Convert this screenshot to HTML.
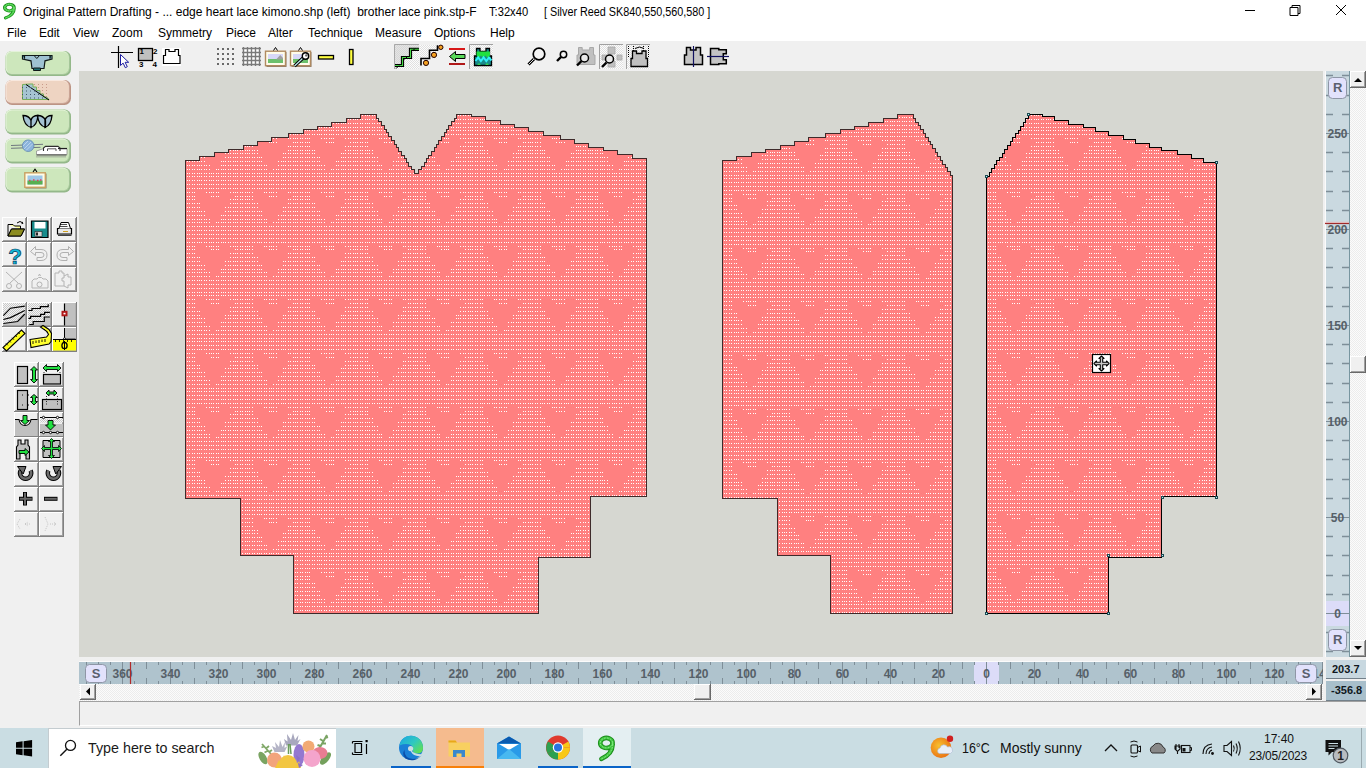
<!DOCTYPE html>
<html><head><meta charset="utf-8">
<style>
*{margin:0;padding:0;box-sizing:border-box}
html,body{width:1366px;height:768px;overflow:hidden;background:#f0f0f0;font-family:"Liberation Sans",sans-serif;font-size:12px;color:#000}
.a{position:absolute}
.t{position:absolute;white-space:pre;line-height:1}
#title{left:0;top:0;width:1366px;height:22px;background:#fff}
#menu{left:0;top:22px;width:1366px;height:19px;background:#fff}
#menu span{position:absolute;top:5px;font-size:12px;line-height:1}
#canvas{left:79px;top:71px;width:1244px;height:586px;background:#d6d7d1}
#vrul{left:1326px;top:71px;width:23px;height:586px;background:#cad9e0}
#vsb{left:1350px;top:71px;width:16px;height:586px}
#hrul{left:79px;top:662px;width:1244px;height:22px;background:#afc3cd}
#hsb{left:79px;top:684px;width:1244px;height:17px}
.chk{background-color:#fbfbfb;background-image:linear-gradient(45deg,#ececec 25%,transparent 25%,transparent 75%,#ececec 75%),linear-gradient(45deg,#ececec 25%,transparent 25%,transparent 75%,#ececec 75%);background-size:2px 2px;background-position:0 0,1px 1px}
#status{left:79px;top:701px;width:1287px;height:25px;background:#f0f0f0;border-top:1px solid #a0a0a0;border-left:1px solid #a0a0a0;border-bottom:1px solid #fff}
#taskbar{left:0;top:728px;width:1366px;height:40px;background:#cadde3}
</style></head><body>
<div id="title" class="a">
<svg class="a" style="left:0;top:0" width="22" height="22"><g transform="translate(2.6 2.9) scale(0.75 0.655)"><g fill="none" stroke-linecap="round"><path d="M15.2 7.2A6.2 5 0 1 1 15.2 7.1M15.3 8.5Q15 18.5 4 23" stroke="#1a8a1a" stroke-width="4.6"/><path d="M15.2 7.2A6.2 5 0 1 1 15.2 7.1M15.3 8.5Q15 18.5 4 23" stroke="#3cc23c" stroke-width="2.8"/><path d="M15.2 7.2A6.2 5 0 1 1 15.2 7.1M15.3 8.5Q15 18.5 4 23" stroke="#90f090" stroke-width="1" stroke-dasharray="1 2"/></g></g></svg>
<span class="t" style="left:23px;top:6px">Original Pattern Drafting - ... edge heart lace kimono.shp (left)  brother lace pink.stp-F</span>
<span class="t" style="left:489px;top:6px;transform-origin:0 0;transform:scaleX(0.93)">T:32x40</span>
<span class="t" style="left:544px;top:6px;transform-origin:0 0;transform:scaleX(0.90)">[ Silver Reed SK840,550,560,580 ]</span>
<svg class="a" style="left:1230px;top:0" width="136" height="22" fill="none" stroke="#000" stroke-width="1"><path d="M15 10.5h10"/><path d="M60 7.5h8v8h-8z M62 7.5v-2h8v8h-2"/><path d="M106 5l10 10M116 5l-10 10"/></svg>
</div>
<div id="menu" class="a">
<span style="left:7px">File</span><span style="left:39px">Edit</span><span style="left:73px">View</span><span style="left:112px">Zoom</span><span style="left:158px">Symmetry</span><span style="left:226px">Piece</span><span style="left:268px">Alter</span><span style="left:308px">Technique</span><span style="left:375px">Measure</span><span style="left:434px">Options</span><span style="left:490px">Help</span>
</div>
<svg class="a" style="left:0;top:0" width="760" height="72">
<defs>
<pattern id="chk2" patternUnits="userSpaceOnUse" width="2" height="2"><rect width="2" height="2" fill="#fcfcfc"/><rect width="1" height="1" fill="#e0e0e0"/><rect x="1" y="1" width="1" height="1" fill="#e0e0e0"/></pattern>
</defs>
<!-- crosshair + cursor -->
<path d="M118.5 46v22M111 52.5h22" stroke="#000" stroke-width="1.2"/>
<path d="M120.5 54.5v11l2.6-2.4 2.2 4.6 2-1-2.2-4.4h3.6z" fill="#fff" stroke="#1c1ca0" stroke-width="1"/>
<!-- numbered square -->
<rect x="138.5" y="48.5" width="14" height="12" fill="#c0c0c0" stroke="#000" stroke-width="1.3"/>
<g font-family="Liberation Sans" font-size="8" font-weight="bold" fill="#000">
<text x="139.5" y="53.8">1</text><text x="153" y="53.8">2</text><text x="139" y="67">3</text><text x="152.5" y="67">4</text>
</g>
<!-- garment outline -->
<rect x="162" y="48" width="19" height="18" fill="#fff"/>
<path d="M163.5 63.5v-8h2v-6h3.5v2h6v-2h3.5v6h1.5v8z" fill="#fff" stroke="#000" stroke-width="1.2"/>
<!-- dots -->
<g fill="#6a6a6a">
<rect x="217" y="48" width="2" height="2"/><rect x="222" y="48" width="2" height="2"/><rect x="227" y="48" width="2" height="2"/><rect x="232" y="48" width="2" height="2"/>
<rect x="217" y="53" width="2" height="2"/><rect x="222" y="53" width="2" height="2"/><rect x="227" y="53" width="2" height="2"/><rect x="232" y="53" width="2" height="2"/>
<rect x="217" y="58" width="2" height="2"/><rect x="222" y="58" width="2" height="2"/><rect x="227" y="58" width="2" height="2"/><rect x="232" y="58" width="2" height="2"/>
<rect x="217" y="63" width="2" height="2"/><rect x="222" y="63" width="2" height="2"/><rect x="227" y="63" width="2" height="2"/><rect x="232" y="63" width="2" height="2"/>
</g>
<!-- grid -->
<rect x="243" y="48" width="17" height="17" fill="#fff"/>
<path d="M243.5 47v19M247.5 47v19M251.5 47v19M255.5 47v19M259.5 47v19M242 48.5h19M242 52.5h19M242 56.5h19M242 60.5h19M242 64.5h19" stroke="#7a7a7a" stroke-width="1.4"/>
<!-- picture -->
<rect x="266.5" y="52" width="20" height="15" fill="#8c7c6c"/>
<rect x="265.5" y="51.2" width="20" height="14.5" fill="#fffcea" stroke="#b08a60" stroke-width="1.4"/>
<rect x="268" y="54" width="15" height="9" fill="#d8d8f8"/>
<rect x="268" y="59" width="15" height="4" fill="#6cc06c"/>
<path d="M276 59.5l4.3-4.5 2.7 3v1.5z" fill="#a0a0a0"/>
<path d="M273.5 50.5l2-3 2 3" fill="none" stroke="#000" stroke-width="1"/>
<!-- picture + wrench -->
<rect x="291.5" y="52" width="20" height="15" fill="#8c7c6c"/>
<rect x="290.5" y="51.2" width="20" height="14.5" fill="#fffcea" stroke="#b08a60" stroke-width="1.4"/>
<rect x="293" y="54" width="15" height="9" fill="#d8d8f8"/>
<rect x="293" y="59" width="15" height="4" fill="#6cc06c"/>
<path d="M298.5 50.5l2-3 2 3" fill="none" stroke="#000" stroke-width="1"/>
<path d="M294.5 66l8.5-8" stroke="#000" stroke-width="3.2"/>
<path d="M294.5 66l8.5-8" stroke="#bfeef0" stroke-width="1.2"/>
<circle cx="305.5" cy="56" r="3.2" fill="#fff" stroke="#000" stroke-width="1.4"/>
<circle cx="306.3" cy="55.4" r="1.2" fill="#666"/>
<!-- rulers -->
<rect x="318.5" y="55.5" width="15" height="3.5" fill="#ffff40" stroke="#000" stroke-width="1.3"/>
<rect x="349.5" y="49.5" width="3.5" height="15" fill="#ffff40" stroke="#000" stroke-width="1.3"/>
<!-- stairs pressed -->
<rect x="394" y="44" width="25" height="25" fill="url(#chk2)"/>
<path d="M395 64.5h7.7v-8h7.8v-8.2h8.5V45H395z" fill="#d0d0d0" opacity=".55"/>
<path d="M394.5 69V44.5H419" fill="none" stroke="#a8a8a8" stroke-width="1"/>
<path d="M395 65.5h7.5v-8h8v-8.2h8.5" fill="none" stroke="#000" stroke-width="3.2"/>
<path d="M395 65.5h7.5v-8h8v-8.2h8.5" fill="none" stroke="#48d848" stroke-width="1.1"/>
<path d="M396 68.6l3-3M404.5 59.5l2.5-2.5M412.5 51l2.5-2.5" stroke="#000" stroke-width="1"/>
<!-- stairs with dots -->
<rect x="420" y="45" width="17.5" height="13.6" fill="url(#chk2)"/>
<path d="M421 65.5v-7h8.5v-8.2h8v-5" fill="none" stroke="#000" stroke-width="1.6"/>
<circle cx="426" cy="62.9" r="2.6" fill="#f4a020" stroke="#200" stroke-width="1"/>
<circle cx="434" cy="54.9" r="2.6" fill="#f4a020" stroke="#200" stroke-width="1"/>
<circle cx="440.8" cy="47.3" r="2.2" fill="#f4a020" stroke="#200" stroke-width="1"/>
<!-- arrow -->
<rect x="449" y="48" width="16" height="2" fill="#d81818"/>
<rect x="449" y="63" width="16" height="2" fill="#b01818"/>
<path d="M449.5 56.5l6-5v3h9.5v4h-9.5v3z" fill="#58d858" stroke="#000" stroke-width="1"/>
<!-- vest pressed -->
<rect x="469" y="44" width="24" height="25" fill="url(#chk2)"/>
<path d="M469.5 69V44.5H493" fill="none" stroke="#a0a0a0" stroke-width="1"/>
<path d="M474.5 65.5v-9.5h2v-7.5h3.5v3h6v-3h3.5v7.5h2v9.5z" fill="#1a8a8a" stroke="#000" stroke-width="1.3"/>
<path d="M476.5 51.5h13.5v4l-2.2 2.5-2.3-2.5-2.2 2.5-2.3-2.5-2.2 2.5-2.3-2.5z" fill="#20e040"/>
<path d="M475.5 61l2.7-3.5 2.7 3.5 2.7-3.5 2.7 3.5 2.7-3.5 2.5 3" fill="none" stroke="#30f0f8" stroke-width="2"/>
<path d="M477 65l2-2 2 2M485 65l2-2 2 2" fill="#30d050" stroke="none"/>
<!-- magnifiers -->
<path d="M528.5 64.5l5.5-5.5" stroke="#000" stroke-width="3"/><path d="M528.5 64.5l5.5-5.5" stroke="#ddd" stroke-width="1"/>
<circle cx="539" cy="54" r="5.8" fill="#f4f4f4" stroke="#000" stroke-width="1.7"/>
<path d="M557 61l4-4" stroke="#000" stroke-width="2.4"/>
<circle cx="563.5" cy="54.5" r="3.2" fill="#f4f4f4" stroke="#000" stroke-width="1.5"/>
<path d="M577 64.5v-9.5h1.5v-7.5h3.7v2.5h7.5v-2.5h3.8v7.5h1.5v9.5z" fill="#c0c0c0" stroke="#a8a8a8" stroke-width="1"/>
<path d="M577 65.5l4.5-4.5" stroke="#000" stroke-width="2.4"/>
<circle cx="584.5" cy="58" r="4" fill="#e8e8e8" stroke="#000" stroke-width="1.5"/>
<rect x="599" y="44" width="24" height="25" fill="url(#chk2)"/>
<path d="M599.5 69V44.5H623" fill="none" stroke="#a0a0a0" stroke-width="1"/>
<path d="M608 47h7v7h-7zM602 55h5v5h-5zM617 55h5v5h-5zM608 61h7v6h-7z" fill="#c0c0c0" stroke="#a8a8a8" stroke-width=".8"/>
<path d="M602 67l4.5-4.5" stroke="#000" stroke-width="2.4"/>
<circle cx="609.5" cy="59" r="4" fill="#e8e8e8" stroke="#000" stroke-width="1.5"/>
<rect x="626" y="44" width="24" height="25" fill="url(#chk2)"/>
<path d="M626.5 69V44.5H650" fill="none" stroke="#a0a0a0" stroke-width="1"/>
<path d="M628.5 46v12M648.5 46v12M633.5 46v6M643.5 46v6" stroke="#000" stroke-width="1" stroke-dasharray="1 1"/>
<path d="M631 66.5v-8h1.5v-7.5h4v2.5h5.5v-2.5h4v7.5h1.5v8z" fill="#c0c0c0" stroke="#000" stroke-width="1.3"/>
<path d="M635 48.5q4.5-3 9 0" fill="none" stroke="#000" stroke-width="1"/>
<!-- symmetry vests -->
<path d="M684.5 64.5v-9.5h2v-7.5h4v2.5h5.5v-2.5h4.5v7.5h2v9.5z" fill="#c4c4c4" stroke="#000" stroke-width="1.5"/>
<path d="M693.5 46v21" stroke="#101060" stroke-width="1.2"/>
<path d="M710.5 64.5v-16h8.3v1.2h7.5v4h-3v6h3v4h-7.5v0.8z" fill="#c4c4c4" stroke="#000" stroke-width="1.5"/>
<path d="M707 56.5h22" stroke="#101060" stroke-width="1.2"/>
</svg>

<svg class="a" style="left:0;top:0" width="79" height="545">
<defs><linearGradient id="gg" x1="0" y1="0" x2="0" y2="1"><stop offset="0" stop-color="#d6ecc8"/><stop offset="1" stop-color="#c4e0b2"/></linearGradient><linearGradient id="gp" x1="0" y1="0" x2="0" y2="1"><stop offset="0" stop-color="#f2dccc"/><stop offset="1" stop-color="#e8ccb8"/></linearGradient><pattern id="dith" patternUnits="userSpaceOnUse" width="2" height="2"><rect width="2" height="2" fill="#f4f4f4"/><rect width="1" height="1" fill="#c8c8c8"/><rect x="1" y="1" width="1" height="1" fill="#c8c8c8"/></pattern></defs>
<rect x="5.5" y="51" width="65.5" height="25" rx="6.5" fill="#94b88a"/>
<rect x="5.5" y="51" width="64" height="23.5" rx="6" fill="#b4d4a6"/>
<rect x="5.5" y="51" width="63" height="22.5" rx="6" fill="#e4f2da"/>
<rect x="6.5" y="52" width="62" height="21.5" rx="5.5" fill="#cde7bc"/>
<rect x="5.5" y="80" width="65.5" height="25" rx="6.5" fill="#bc9484"/>
<rect x="5.5" y="80" width="64" height="23.5" rx="6" fill="#d8b4a4"/>
<rect x="5.5" y="80" width="63" height="22.5" rx="6" fill="#f8e8de"/>
<rect x="6.5" y="81" width="62" height="21.5" rx="5.5" fill="#eed4c2"/>
<rect x="5.5" y="109.5" width="65.5" height="25" rx="6.5" fill="#94b88a"/>
<rect x="5.5" y="109.5" width="64" height="23.5" rx="6" fill="#b4d4a6"/>
<rect x="5.5" y="109.5" width="63" height="22.5" rx="6" fill="#e4f2da"/>
<rect x="6.5" y="110.5" width="62" height="21.5" rx="5.5" fill="#cde7bc"/>
<rect x="5.5" y="138.5" width="65.5" height="25" rx="6.5" fill="#94b88a"/>
<rect x="5.5" y="138.5" width="64" height="23.5" rx="6" fill="#b4d4a6"/>
<rect x="5.5" y="138.5" width="63" height="22.5" rx="6" fill="#e4f2da"/>
<rect x="6.5" y="139.5" width="62" height="21.5" rx="5.5" fill="#cde7bc"/>
<rect x="5.5" y="167.5" width="65.5" height="25" rx="6.5" fill="#94b88a"/>
<rect x="5.5" y="167.5" width="64" height="23.5" rx="6" fill="#b4d4a6"/>
<rect x="5.5" y="167.5" width="63" height="22.5" rx="6" fill="#e4f2da"/>
<rect x="6.5" y="168.5" width="62" height="21.5" rx="5.5" fill="#cde7bc"/>
<path d="M22.5 55.5h29.5v3.5l-7 1.8-1 7.7h-12l-1-7.7-8.5-1.8z" fill="#9ec2d2" stroke="#101818" stroke-width="1.2"/>
<path d="M22.5 55.5h2v3.3M52 55.5h-2v3.3" stroke="#101818" stroke-width="1.2" fill="#1a5a60"/>
<path d="M33.5 68h7v2.5h-7z" fill="#1d6d70" stroke="#101818" stroke-width="1"/>
<path d="M34.5 56l2.3 2.5 2.3-2.5" fill="none" stroke="#101818" stroke-width="1"/>
<g fill="#c89a8a"><rect x="34" y="84" width="1" height="1"/><rect x="34" y="87" width="1" height="1"/><rect x="34" y="90" width="1" height="1"/><rect x="34" y="93" width="1" height="1"/><rect x="34" y="96" width="1" height="1"/><rect x="34" y="99" width="1" height="1"/><rect x="38" y="84" width="1" height="1"/><rect x="38" y="87" width="1" height="1"/><rect x="38" y="90" width="1" height="1"/><rect x="38" y="93" width="1" height="1"/><rect x="38" y="96" width="1" height="1"/><rect x="38" y="99" width="1" height="1"/><rect x="42" y="84" width="1" height="1"/><rect x="42" y="87" width="1" height="1"/><rect x="42" y="90" width="1" height="1"/><rect x="42" y="93" width="1" height="1"/><rect x="42" y="96" width="1" height="1"/><rect x="42" y="99" width="1" height="1"/><rect x="46" y="84" width="1" height="1"/><rect x="46" y="87" width="1" height="1"/><rect x="46" y="90" width="1" height="1"/><rect x="46" y="93" width="1" height="1"/><rect x="46" y="96" width="1" height="1"/><rect x="46" y="99" width="1" height="1"/></g>
<path d="M22.5 84.5v15h26.5l-2.5-2.5h-3v-3h-3.5v-3.5h-3.5v-3.5h-3.5v-3h-3z" fill="#a6c4d2" stroke="#78b058" stroke-width="1"/>
<path d="M26 84.5l23 15.5" stroke="#000" stroke-width="1"/>
<g fill="#405868"><rect x="22" y="87.0" width="1" height="1"/><rect x="22" y="90.5" width="1" height="1"/><rect x="22" y="94.0" width="1" height="1"/><rect x="22" y="97.5" width="1" height="1"/><rect x="26" y="87.0" width="1" height="1"/><rect x="26" y="90.5" width="1" height="1"/><rect x="26" y="94.0" width="1" height="1"/><rect x="26" y="97.5" width="1" height="1"/><rect x="30" y="87.0" width="1" height="1"/><rect x="30" y="90.5" width="1" height="1"/><rect x="30" y="94.0" width="1" height="1"/><rect x="30" y="97.5" width="1" height="1"/><rect x="34" y="90.5" width="1" height="1"/><rect x="34" y="94.0" width="1" height="1"/><rect x="34" y="97.5" width="1" height="1"/><rect x="38" y="94.0" width="1" height="1"/><rect x="38" y="97.5" width="1" height="1"/><rect x="42" y="97.5" width="1" height="1"/></g>
<path d="M23 115.5q6 0 8 5l0 7q-7 -2 -8 -12zM38 115.5q-6 0 -7 5l0 7q6 -2 7 -12z" fill="#a4c2d2" stroke="#000" stroke-width="1.3"/>
<path d="M37.5 115.5q6 0 8 5l0 7q-7 -2 -8 -12zM52 115.5q-6 0 -7 5l0 7q6 -2 7 -12z" fill="#a4c2d2" stroke="#000" stroke-width="1.3"/>
<path d="M11 145.5l32-1.2M11 148.3l29.5-1" stroke="#707880" stroke-width="1"/>
<circle cx="28.2" cy="145.7" r="5.8" fill="#8cb4dc" stroke="#6088b0" stroke-width=".8"/>
<path d="M24 149l7-7M26 150.5l6.5-6.5M23 146l5-5" stroke="#c8dcf0" stroke-width=".8"/>
<path d="M36.5 154.5v-3.5l6.5-2.2h24v5.7z" fill="#fff" stroke="#909090" stroke-width=".8"/>
<path d="M43.5 151v-3l2-1.6h12.5l2 1.6v3" fill="#fff" stroke="#303030" stroke-width="1.1"/>
<path d="M47.5 151v-2.2h8.5v2.2" fill="none" stroke="#303030" stroke-width=".8"/>
<path d="M36.5 155h30" stroke="#606060" stroke-width="1.2"/>
<path d="M37 156v1.5M39 156v1.5M41 156v1.5M43 156v1.5M45 156v1.5M47 156v1.5M49 156v1.5M51 156v1.5M53 156v1.5M55 156v1.5M57 156v1.5M59 156v1.5M61 156v1.5M63 156v1.5M65 156v1.5" stroke="#808080" stroke-width=".8"/>
<path d="M58 148.5h9" stroke="#202020" stroke-width="1.2"/>
<rect x="25.5" y="173.5" width="21" height="15" fill="#8c7c6c"/>
<rect x="24.8" y="172.8" width="20.5" height="14.5" fill="#fffbe6" stroke="#c8a060" stroke-width="1.4"/>
<rect x="27.5" y="175.5" width="15" height="9" fill="#9ec8e8"/>
<rect x="27.5" y="180.5" width="15" height="4" fill="#58b050"/>
<path d="M29 180.5h1.5M33 180h1.5M37 180.5h1.5M40 180h1.5" stroke="#e04060" stroke-width="1.5"/>
<path d="M33 172l2-2.8 2 2.8" fill="none" stroke="#000" stroke-width="1.1"/>
<rect x="2" y="217" width="25" height="25" fill="#808080"/>
<rect x="2" y="217" width="24" height="24" fill="#fff"/>
<rect x="3" y="218" width="23" height="23" fill="#a0a0a0"/>
<rect x="3" y="218" width="22" height="22" fill="#f0f0f0"/>
<rect x="27" y="217" width="25" height="25" fill="#808080"/>
<rect x="27" y="217" width="24" height="24" fill="#fff"/>
<rect x="28" y="218" width="23" height="23" fill="#a0a0a0"/>
<rect x="28" y="218" width="22" height="22" fill="#f0f0f0"/>
<rect x="52" y="217" width="25" height="25" fill="#808080"/>
<rect x="52" y="217" width="24" height="24" fill="#fff"/>
<rect x="53" y="218" width="23" height="23" fill="#a0a0a0"/>
<rect x="53" y="218" width="22" height="22" fill="#f0f0f0"/>
<rect x="2" y="242" width="25" height="25" fill="#808080"/>
<rect x="2" y="242" width="24" height="24" fill="#fff"/>
<rect x="3" y="243" width="23" height="23" fill="#a0a0a0"/>
<rect x="3" y="243" width="22" height="22" fill="#f0f0f0"/>
<rect x="27" y="242" width="25" height="25" fill="#808080"/>
<rect x="27" y="242" width="24" height="24" fill="#fff"/>
<rect x="28" y="243" width="23" height="23" fill="#a0a0a0"/>
<rect x="28" y="243" width="22" height="22" fill="#f0f0f0"/>
<rect x="52" y="242" width="25" height="25" fill="#808080"/>
<rect x="52" y="242" width="24" height="24" fill="#fff"/>
<rect x="53" y="243" width="23" height="23" fill="#a0a0a0"/>
<rect x="53" y="243" width="22" height="22" fill="#f0f0f0"/>
<rect x="2" y="267" width="25" height="25" fill="#808080"/>
<rect x="2" y="267" width="24" height="24" fill="#fff"/>
<rect x="3" y="268" width="23" height="23" fill="#a0a0a0"/>
<rect x="3" y="268" width="22" height="22" fill="#f0f0f0"/>
<rect x="27" y="267" width="25" height="25" fill="#808080"/>
<rect x="27" y="267" width="24" height="24" fill="#fff"/>
<rect x="28" y="268" width="23" height="23" fill="#a0a0a0"/>
<rect x="28" y="268" width="22" height="22" fill="#f0f0f0"/>
<rect x="52" y="267" width="25" height="25" fill="#808080"/>
<rect x="52" y="267" width="24" height="24" fill="#fff"/>
<rect x="53" y="268" width="23" height="23" fill="#a0a0a0"/>
<rect x="53" y="268" width="22" height="22" fill="#f0f0f0"/>
<rect x="2" y="302" width="25" height="25" fill="#808080"/>
<rect x="2" y="302" width="24" height="24" fill="#fff"/>
<rect x="3" y="303" width="23" height="23" fill="#a0a0a0"/>
<rect x="3" y="303" width="22" height="22" fill="#f0f0f0"/>
<rect x="27" y="302" width="25" height="25" fill="#808080"/>
<rect x="27" y="302" width="24" height="24" fill="#fff"/>
<rect x="28" y="303" width="23" height="23" fill="#a0a0a0"/>
<rect x="28" y="303" width="22" height="22" fill="#f0f0f0"/>
<rect x="52" y="302" width="25" height="25" fill="#808080"/>
<rect x="52" y="302" width="24" height="24" fill="#fff"/>
<rect x="53" y="303" width="23" height="23" fill="#a0a0a0"/>
<rect x="53" y="303" width="22" height="22" fill="#f0f0f0"/>
<rect x="2" y="327" width="25" height="25" fill="#808080"/>
<rect x="2" y="327" width="24" height="24" fill="#fff"/>
<rect x="3" y="328" width="23" height="23" fill="#a0a0a0"/>
<rect x="3" y="328" width="22" height="22" fill="#f0f0f0"/>
<rect x="27" y="327" width="25" height="25" fill="#808080"/>
<rect x="27" y="327" width="24" height="24" fill="#fff"/>
<rect x="28" y="328" width="23" height="23" fill="#a0a0a0"/>
<rect x="28" y="328" width="22" height="22" fill="#f0f0f0"/>
<rect x="52" y="327" width="25" height="25" fill="#808080"/>
<rect x="52" y="327" width="24" height="24" fill="#fff"/>
<rect x="53" y="328" width="23" height="23" fill="#a0a0a0"/>
<rect x="53" y="328" width="22" height="22" fill="#f0f0f0"/>
<rect x="14" y="362" width="25" height="25" fill="#808080"/>
<rect x="14" y="362" width="24" height="24" fill="#fff"/>
<rect x="15" y="363" width="23" height="23" fill="#a0a0a0"/>
<rect x="15" y="363" width="22" height="22" fill="#f0f0f0"/>
<rect x="39" y="362" width="25" height="25" fill="#808080"/>
<rect x="39" y="362" width="24" height="24" fill="#fff"/>
<rect x="40" y="363" width="23" height="23" fill="#a0a0a0"/>
<rect x="40" y="363" width="22" height="22" fill="#f0f0f0"/>
<rect x="14" y="387" width="25" height="25" fill="#808080"/>
<rect x="14" y="387" width="24" height="24" fill="#fff"/>
<rect x="15" y="388" width="23" height="23" fill="#a0a0a0"/>
<rect x="15" y="388" width="22" height="22" fill="#f0f0f0"/>
<rect x="39" y="387" width="25" height="25" fill="#808080"/>
<rect x="39" y="387" width="24" height="24" fill="#fff"/>
<rect x="40" y="388" width="23" height="23" fill="#a0a0a0"/>
<rect x="40" y="388" width="22" height="22" fill="#f0f0f0"/>
<rect x="14" y="412" width="25" height="25" fill="#808080"/>
<rect x="14" y="412" width="24" height="24" fill="#fff"/>
<rect x="15" y="413" width="23" height="23" fill="#a0a0a0"/>
<rect x="15" y="413" width="22" height="22" fill="#f0f0f0"/>
<rect x="39" y="412" width="25" height="25" fill="#808080"/>
<rect x="39" y="412" width="24" height="24" fill="#fff"/>
<rect x="40" y="413" width="23" height="23" fill="#a0a0a0"/>
<rect x="40" y="413" width="22" height="22" fill="#f0f0f0"/>
<rect x="14" y="437" width="25" height="25" fill="#808080"/>
<rect x="14" y="437" width="24" height="24" fill="#fff"/>
<rect x="15" y="438" width="23" height="23" fill="#a0a0a0"/>
<rect x="15" y="438" width="22" height="22" fill="#f0f0f0"/>
<rect x="39" y="437" width="25" height="25" fill="#808080"/>
<rect x="39" y="437" width="24" height="24" fill="#fff"/>
<rect x="40" y="438" width="23" height="23" fill="#a0a0a0"/>
<rect x="40" y="438" width="22" height="22" fill="#f0f0f0"/>
<rect x="14" y="462" width="25" height="25" fill="#808080"/>
<rect x="14" y="462" width="24" height="24" fill="#fff"/>
<rect x="15" y="463" width="23" height="23" fill="#a0a0a0"/>
<rect x="15" y="463" width="22" height="22" fill="#f0f0f0"/>
<rect x="39" y="462" width="25" height="25" fill="#808080"/>
<rect x="39" y="462" width="24" height="24" fill="#fff"/>
<rect x="40" y="463" width="23" height="23" fill="#a0a0a0"/>
<rect x="40" y="463" width="22" height="22" fill="#f0f0f0"/>
<rect x="14" y="487" width="25" height="25" fill="#808080"/>
<rect x="14" y="487" width="24" height="24" fill="#fff"/>
<rect x="15" y="488" width="23" height="23" fill="#a0a0a0"/>
<rect x="15" y="488" width="22" height="22" fill="#f0f0f0"/>
<rect x="39" y="487" width="25" height="25" fill="#808080"/>
<rect x="39" y="487" width="24" height="24" fill="#fff"/>
<rect x="40" y="488" width="23" height="23" fill="#a0a0a0"/>
<rect x="40" y="488" width="22" height="22" fill="#f0f0f0"/>
<rect x="14" y="512" width="25" height="25" fill="#808080"/>
<rect x="14" y="512" width="24" height="24" fill="#fff"/>
<rect x="15" y="513" width="23" height="23" fill="#a0a0a0"/>
<rect x="15" y="513" width="22" height="22" fill="#f0f0f0"/>
<rect x="39" y="512" width="25" height="25" fill="#808080"/>
<rect x="39" y="512" width="24" height="24" fill="#fff"/>
<rect x="40" y="513" width="23" height="23" fill="#a0a0a0"/>
<rect x="40" y="513" width="22" height="22" fill="#f0f0f0"/>
<path d="M8 224.5h5l1.5 1.5h6v3" fill="#ffff90" stroke="#000" stroke-width="1"/>
<path d="M8 224.5v11.5h13l3.5-7h-13l-3.5 7" fill="#ffff90" stroke="#000" stroke-width="1"/>
<path d="M11.5 229h13l-3.5 7h-13z" fill="#8c8c20" stroke="#000" stroke-width="1"/>
<path d="M17 223q3-3 6 0" fill="none" stroke="#000" stroke-width="1"/><path d="M22 221.5l1.5 2-2 .8z" fill="#000"/>
<path d="M31.5 221h16.5v16.5h-16.5z" fill="#188c8c" stroke="#000" stroke-width="1.2"/>
<rect x="34.5" y="222" width="11" height="6.5" fill="#fff"/><rect x="35" y="231.5" width="7" height="5" fill="#d8d8d8" stroke="#222" stroke-width=".6"/><rect x="36" y="232.5" width="2" height="3" fill="#222"/>
<path d="M57.5 228.5h14v5.5h-14z" fill="#e8e8e8" stroke="#000" stroke-width="1.2"/>
<path d="M59 228.5l2-6h7.5l2 6" fill="#fff" stroke="#000" stroke-width="1"/>
<path d="M60 224.5h7M59.5 226.5h8" stroke="#000" stroke-width=".7"/>
<path d="M58 234.5h13.5v1.5h-13.5z" fill="#404040"/><path d="M63 231.5h5" stroke="#d0a020" stroke-width="1"/>
<text x="15" y="264" font-family="Liberation Sans" font-weight="bold" font-size="22.5" fill="#10b8d8" stroke="#0a3a5a" stroke-width=".7" text-anchor="middle">?</text>
<g fill="none" stroke="#b0b0b0" stroke-width="1"><path d="M30.5 251.5l5-5v3h5.5q6 0 6 5.5t-6 5.5h-4v-3h4q3 0 3-2.5t-3-2.5h-5.5v3z"/><path d="M73.5 251.5l-5-5v3h-5.5q-6 0-6 5.5t6 5.5h4v-3h-4q-3 0-3-2.5t3-2.5h5.5v3z"/></g>
<g fill="none" stroke="#b4b4b4" stroke-width="1"><path d="M6 272l12 11M22 272l-12 11"/><circle cx="9" cy="286" r="2.5"/><circle cx="19" cy="286" r="2.5"/><path d="M32 288v-7l2-2h3l1.5-1.5h3l1.5 1.5h3l2 2v7z"/><circle cx="39.5" cy="284.5" r="2.5"/><path d="M38.5 276l1-2 1 2"/><path d="M55 273h4v-2h3v2h2v5h-2v3h2v5h-9z M64 276l4-2v3h3v8h-3v3l-4-2"/></g>
<rect x="3" y="303" width="22" height="22" fill="url(#dith)"/>
<path d="M17.6 321.5L24.8 314V325H3v-1.5z" fill="#c4c4c4"/>
<path d="M3.3 315.7L10.5 308.2L24.8 306.2M3.3 319.5L10.5 317.6L24.8 310.5M3.3 323.5L17.6 321.5L24.8 314" fill="none" stroke="#000" stroke-width="1.2"/>
<rect x="28" y="303" width="22" height="22" fill="url(#dith)"/>
<path d="M29.3 324.5h3.9v-3h11.1v-4.5h5.6V325H29.3z" fill="#c4c4c4"/>
<path d="M28.4 310.5H32v-2h8.4v-1.9h7.8v-2.3M28.4 318.3h2.2v-2h10v-2h4v-1.9h5.3M29.3 324.5h3.9v-3h11.1v-4.5h5.6" fill="none" stroke="#000" stroke-width="1.2"/>
<rect x="64.5" y="303" width="11" height="22" fill="#c0c0c0"/>
<path d="M64.5 303.5v22" stroke="#000" stroke-width="1.2"/>
<rect x="61.5" y="310.8" width="6" height="5.5" fill="#b01818"/><rect x="63.5" y="312.8" width="2" height="1.6" fill="#fff"/>
<path d="M3 347.5l3.5 3.5 18.5-17.5-3.5-3.5z" fill="#ffff20" stroke="#000" stroke-width="1.1"/>
<path d="M6 343.5l1.8 1.8M9 340.6l1.8 1.8M12 337.8l1.8 1.8M15 335l1.8 1.8M18 332.2l1.8 1.8" stroke="#000" stroke-width=".9"/>
<path d="M30 339.5l16.5-2.5 2-2.5-1.5-3-6.5-4.5 2.5-1.5 6 4 2.5 4-.5 8-2 2.5-18 3.5z" fill="#ffff30" stroke="#000" stroke-width="1.1"/>
<path d="M33 341v3M36 340.5v2.5M39 340v3M42 339.5v2.5M45 339v3M44 329l1.5 1.5M46.5 331.5l1.2 1.6" stroke="#000" stroke-width=".9"/>
<rect x="65" y="328" width="11" height="10" fill="#c0c0c0"/>
<path d="M64.5 328v11h10.5" fill="none" stroke="#000" stroke-width="1"/><circle cx="64.5" cy="339" r="1.2" fill="#fff" stroke="#000" stroke-width=".8"/>
<rect x="53" y="339.5" width="23" height="11" fill="#ffff00"/><path d="M53 339.5h23" stroke="#000" stroke-width="1"/>
<path d="M55.5 340v2M59.5 340v2M63.5 340v2M67.5 340v2M71.5 340v2" stroke="#000" stroke-width=".8"/>
<ellipse cx="64.5" cy="345.5" rx="2.6" ry="3.2" fill="none" stroke="#000" stroke-width="1.3"/><path d="M64.5 341v9" stroke="#000" stroke-width="1"/>
<rect x="17.5" y="366.5" width="10" height="17" fill="#c0c0c0" stroke="#000" stroke-width="1.2"/>
<path d="M34 366.5l-3.5 3.5h2v9.5h-2l3.5 3.5 3.5-3.5h-2v-9.5h2z" fill="#20e040" stroke="#000" stroke-width=".9"/>
<rect x="43.5" y="374.5" width="17" height="9.5" fill="#c0c0c0" stroke="#000" stroke-width="1.2"/>
<path d="M43 368l3.5-3.5v2h11v-2l3.5 3.5-3.5 3.5v-2h-11v2z" fill="#20e040" stroke="#000" stroke-width=".9"/>
<path d="M44 372v1.5M60 372v1.5" stroke="#000" stroke-width=".8" stroke-dasharray="1 1"/>
<rect x="17.5" y="390.5" width="10" height="19" fill="#c0c0c0" stroke="#000" stroke-width="1.2"/>
<path d="M22 395h1.5M22 405h1.5M28 395h2M28 405h2" stroke="#000" stroke-width=".9" stroke-dasharray="1 1"/>
<path d="M34 394.5l-3.5 3h2v4h-2l3.5 3.5 3.5-3.5h-2v-4h2z" fill="#20e040" stroke="#000" stroke-width=".9"/>
<rect x="42.5" y="399.5" width="19" height="10" fill="#c0c0c0" stroke="#000" stroke-width="1.2"/>
<path d="M46 393l3-3v2h5v-2l3 3-3 3v-2h-5v2z" fill="#20e040" stroke="#000" stroke-width=".9"/>
<path d="M46.5 396v9M57.5 396v9" stroke="#000" stroke-width=".8" stroke-dasharray="1 1.5"/>
<path d="M15 419.5h4q1 6 6 6t6-6h6.5v16.5h-22.5z" fill="#c0c0c0"/>
<path d="M15 419.5h4q1 6 6 6t6-6h6.5" fill="none" stroke="#000" stroke-width="1.1"/>
<path d="M25 424.5l-4.5-4h2.5v-5h4v5h2.5z" fill="#20e040" stroke="#000" stroke-width=".9"/>
<rect x="40" y="419" width="23" height="3.5" fill="url(#dith)"/><rect x="40" y="424" width="23" height="12" fill="#c0c0c0"/>
<path d="M40 417.5h23M40 432.5h23" stroke="#000" stroke-width="1"/>
<g fill="#fff" stroke="#000" stroke-width=".9"><circle cx="43.5" cy="417.5" r="1.2"/><circle cx="57.5" cy="417.5" r="1.2"/><circle cx="43.5" cy="432.5" r="1.2"/><circle cx="50.5" cy="432.5" r="1.2"/><circle cx="57.5" cy="432.5" r="1.2"/></g>
<path d="M50.5 430l-5-5h2.5v-4.5h5v4.5h2.5z" fill="#20e040" stroke="#000" stroke-width=".9"/>
<path d="M16.5 459v-12l1.5-2v-5h3v4h4v-4h3v5l1.5 2v12h-3.5v-6h-6v6z" fill="#c0c0c0" stroke="#000" stroke-width="1.1"/>
<path d="M19 450.5h6v-2l4 3.5-4 3.5v-2h-6z" fill="#20e040" stroke="#000" stroke-width=".9"/>
<path d="M43 440.5h17v17h-17z" fill="#c0c0c0" stroke="#000" stroke-width="1"/><path d="M51.5 440v18M42.5 449h18" stroke="#808080" stroke-width="1.5"/>
<path d="M51.5 438.5l3 3h-2v6h6v-2l3 3-3 3v-2h-6v6h2l-3 3-3-3h2v-6h-6v2l-3-3 3-3v2h6v-6h-2z" fill="#20e040" stroke="#000" stroke-width=".8"/>
<path d="M20.6 470.6A5.6 5.6 0 1 0 30.6 470.6" fill="none" stroke="#000" stroke-width="4.4"/><path d="M20.6 470.6A5.6 5.6 0 1 0 30.6 470.6" fill="none" stroke="#6a6a6a" stroke-width="2.4"/>
<path d="M17.5 466.5h8.5l-2.8 7.5z" fill="#6a6a6a" stroke="#000" stroke-width="1"/>
<path d="M48.4 470.6A5.6 5.6 0 1 0 58.4 470.6" fill="none" stroke="#000" stroke-width="4.4"/><path d="M48.4 470.6A5.6 5.6 0 1 0 58.4 470.6" fill="none" stroke="#6a6a6a" stroke-width="2.4"/>
<path d="M61.5 466.5h-8.5l2.8 7.5z" fill="#6a6a6a" stroke="#000" stroke-width="1"/>
<path d="M25 492v13.5M19 498.8h13.5" stroke="#000" stroke-width="4"/><path d="M25 492.8v12M19.8 498.8h12" stroke="#666" stroke-width="2"/>
<path d="M44 498.8h13.5" stroke="#000" stroke-width="4"/><path d="M44.8 498.8h12" stroke="#666" stroke-width="2"/>
<g fill="none" stroke="#c0c0c0" stroke-width=".9" stroke-dasharray="1 1"><path d="M20 519l-3 5 3 5M25 524h6M25 524l3-2M25 524l3 2"/><path d="M45 517l3 7-3 7M50 524h6l-2-2M56 524l-2 2"/></g>
</svg>
<div id="canvas" class="a"></div>
<svg class="a" style="left:0;top:0" width="1366" height="768" shape-rendering="crispEdges"><defs><pattern id="dp1A" patternUnits="userSpaceOnUse" x="7" y="0" width="12" height="1"><path d="M0 0h1v1h-1zM2 0h1v1h-1zM5 0h1v1h-1zM7 0h1v1h-1zM10 0h1v1h-1z" fill="#fff"/></pattern><pattern id="dp1B" patternUnits="userSpaceOnUse" x="7" y="0" width="12" height="1"><path d="M0 0h1v1h-1zM2 0h1v1h-1zM5 0h1v1h-1zM7 0h1v1h-1zM9 0h1v1h-1z" fill="#fff"/></pattern><clipPath id="cp1"><path d="M185 498 185 160 199 160 199 156 214 156 214 152 228 152 228 149 243 149 243 145 257 145 257 141 271 141 271 137 288 137 288 133 303 133 303 129 317 129 317 126 331 126 331 122 346 122 346 118 360 118 360 114 376 114 376 118 378 118 378 121 381 121 381 125 384 125 384 129 386 129 386 132 388 132 388 136 391 136 391 140 394 140 394 144 396 144 396 147 398 147 398 151 401 151 401 155 404 155 404 158 406 158 406 162 408 162 408 166 411 166 411 169 414 169 414 173 416 173 418 173 418 169 421 169 421 166 424 166 424 162 426 162 426 158 428 158 428 155 431 155 431 151 434 151 434 147 436 147 436 144 438 144 438 140 441 140 441 136 444 136 444 132 446 132 446 129 448 129 448 125 451 125 451 121 454 121 454 118 456 118 456 114 471 114 471 116 485 116 485 120 500 120 500 124 514 124 514 127 528 127 528 131 543 131 543 135 560 135 560 139 574 139 574 143 588 143 588 147 603 147 603 150 617 150 617 154 632 154 632 158 646 158 646 496 590 496 590 557 538 557 538 613 293 613 293 555 240 555 240 498Z"/></clipPath><pattern id="dp2A" patternUnits="userSpaceOnUse" x="4" y="0" width="12" height="1"><path d="M0 0h1v1h-1zM2 0h1v1h-1zM5 0h1v1h-1zM7 0h1v1h-1zM10 0h1v1h-1z" fill="#fff"/></pattern><pattern id="dp2B" patternUnits="userSpaceOnUse" x="4" y="0" width="12" height="1"><path d="M0 0h1v1h-1zM2 0h1v1h-1zM5 0h1v1h-1zM7 0h1v1h-1zM9 0h1v1h-1z" fill="#fff"/></pattern><clipPath id="cp2"><path d="M722 498 722 160 736 160 736 156 751 156 751 152 765 152 765 149 780 149 780 145 794 145 794 141 808 141 808 137 825 137 825 133 840 133 840 129 854 129 854 126 868 126 868 122 883 122 883 118 897 118 897 114 913 114 913 118 915 118 915 122 918 122 918 125 920 125 920 129 923 129 923 133 925 133 925 137 928 137 928 141 930 141 930 144 932 144 932 148 935 148 935 152 937 152 937 156 940 156 940 160 942 160 942 164 945 164 945 167 947 167 947 171 950 171 950 175 952 175 952 613 830 613 830 555 777 555 777 498Z"/></clipPath><pattern id="dp3A" patternUnits="userSpaceOnUse" x="4" y="0" width="12" height="1"><path d="M0 0h1v1h-1zM2 0h1v1h-1zM5 0h1v1h-1zM7 0h1v1h-1zM10 0h1v1h-1z" fill="#fff"/></pattern><pattern id="dp3B" patternUnits="userSpaceOnUse" x="4" y="0" width="12" height="1"><path d="M0 0h1v1h-1zM2 0h1v1h-1zM5 0h1v1h-1zM7 0h1v1h-1zM9 0h1v1h-1z" fill="#fff"/></pattern><clipPath id="cp3"><path d="M986 613 986 176 989 176 989 172 991 172 991 168 994 168 994 164 996 164 996 160 999 160 999 157 1002 157 1002 153 1004 153 1004 149 1007 149 1007 145 1010 145 1010 141 1012 141 1012 137 1015 137 1015 133 1018 133 1018 130 1020 130 1020 126 1023 126 1023 122 1025 122 1025 118 1028 118 1028 114 1042 114 1042 116 1054 116 1054 120 1068 120 1068 124 1083 124 1083 127 1095 127 1095 131 1108 131 1108 135 1123 135 1123 139 1135 139 1135 143 1149 143 1149 147 1161 147 1161 150 1177 150 1177 154 1191 154 1191 158 1203 158 1203 162 1216 162 1216 496 1161 496 1161 557 1108 557 1108 613Z"/></clipPath></defs><g clip-path="url(#cp1)"><path d="M185 498 185 160 199 160 199 156 214 156 214 152 228 152 228 149 243 149 243 145 257 145 257 141 271 141 271 137 288 137 288 133 303 133 303 129 317 129 317 126 331 126 331 122 346 122 346 118 360 118 360 114 376 114 376 118 378 118 378 121 381 121 381 125 384 125 384 129 386 129 386 132 388 132 388 136 391 136 391 140 394 140 394 144 396 144 396 147 398 147 398 151 401 151 401 155 404 155 404 158 406 158 406 162 408 162 408 166 411 166 411 169 414 169 414 173 416 173 418 173 418 169 421 169 421 166 424 166 424 162 426 162 426 158 428 158 428 155 431 155 431 151 434 151 434 147 436 147 436 144 438 144 438 140 441 140 441 136 444 136 444 132 446 132 446 129 448 129 448 125 451 125 451 121 454 121 454 118 456 118 456 114 471 114 471 116 485 116 485 120 500 120 500 124 514 124 514 127 528 127 528 131 543 131 543 135 560 135 560 139 574 139 574 143 588 143 588 147 603 147 603 150 617 150 617 154 632 154 632 158 646 158 646 496 590 496 590 557 538 557 538 613 293 613 293 555 240 555 240 498Z" fill="#ff8080"/><path d="M185 111H443v1H185zM185 115H443v1H185zM185 119H443v1H185zM185 123H443v1H185zM185 127H443v1H185zM185 130H443v1H185zM185 134H443v1H185zM185 138H443v1H185zM185 142H443v1H185zM185 146H443v1H185zM185 150H443v1H185zM185 153H443v1H185zM185 157H443v1H185zM185 161H443v1H185zM185 165H443v1H185zM185 169H443v1H185zM185 173H443v1H185zM185 176H443v1H185zM185 180H443v1H185zM185 184H443v1H185zM185 188H443v1H185zM185 192H443v1H185zM185 196H443v1H185zM185 199H443v1H185zM185 203H443v1H185zM185 207H443v1H185zM185 211H443v1H185zM185 215H443v1H185zM185 219H443v1H185zM185 222H443v1H185zM185 226H443v1H185zM185 230H443v1H185zM185 234H443v1H185zM185 238H443v1H185zM185 242H443v1H185zM185 246H443v1H185zM185 249H443v1H185zM185 253H443v1H185zM185 257H443v1H185zM185 261H443v1H185zM185 265H443v1H185zM185 269H443v1H185zM185 272H443v1H185zM185 276H443v1H185zM185 280H443v1H185zM185 284H443v1H185zM185 288H443v1H185zM185 292H443v1H185zM185 295H443v1H185zM185 299H443v1H185zM185 303H443v1H185zM185 307H443v1H185zM185 311H443v1H185zM185 315H443v1H185zM185 318H443v1H185zM185 322H443v1H185zM185 326H443v1H185zM185 330H443v1H185zM185 334H443v1H185zM185 338H443v1H185zM185 341H443v1H185zM185 345H443v1H185zM185 349H443v1H185zM185 353H443v1H185zM185 357H443v1H185zM185 361H443v1H185zM185 365H443v1H185zM185 368H443v1H185zM185 372H443v1H185zM185 376H443v1H185zM185 380H443v1H185zM185 384H443v1H185zM185 388H443v1H185zM185 391H443v1H185zM185 395H443v1H185zM185 399H443v1H185zM185 403H443v1H185zM185 407H443v1H185zM185 411H443v1H185zM185 414H443v1H185zM185 418H443v1H185zM185 422H443v1H185zM185 426H443v1H185zM185 430H443v1H185zM185 434H443v1H185zM185 437H443v1H185zM185 441H443v1H185zM185 445H443v1H185zM185 449H443v1H185zM185 453H443v1H185zM185 457H443v1H185zM185 460H443v1H185zM185 464H443v1H185zM185 468H443v1H185zM185 472H443v1H185zM185 476H443v1H185zM185 480H443v1H185zM185 483H443v1H185zM185 487H443v1H185zM185 491H443v1H185zM185 495H443v1H185zM185 499H443v1H185zM185 503H443v1H185zM185 507H443v1H185zM185 510H443v1H185zM185 514H443v1H185zM185 518H443v1H185zM185 522H443v1H185zM185 526H443v1H185zM185 530H443v1H185zM185 533H443v1H185zM185 537H443v1H185zM185 541H443v1H185zM185 545H443v1H185zM185 549H443v1H185zM185 553H443v1H185zM185 556H443v1H185zM185 560H443v1H185zM185 564H443v1H185zM185 568H443v1H185zM185 572H443v1H185zM185 576H443v1H185zM185 579H443v1H185zM185 583H443v1H185zM185 587H443v1H185zM185 591H443v1H185zM185 595H443v1H185zM185 599H443v1H185zM185 602H443v1H185zM185 606H443v1H185zM185 610H443v1H185z" fill="url(#dp1A)"/><path d="M443 111H646v1H443zM443 115H646v1H443zM443 119H646v1H443zM443 123H646v1H443zM443 127H646v1H443zM443 130H646v1H443zM443 134H646v1H443zM443 138H646v1H443zM443 142H646v1H443zM443 146H646v1H443zM443 150H646v1H443zM443 153H646v1H443zM443 157H646v1H443zM443 161H646v1H443zM443 165H646v1H443zM443 169H646v1H443zM443 173H646v1H443zM443 176H646v1H443zM443 180H646v1H443zM443 184H646v1H443zM443 188H646v1H443zM443 192H646v1H443zM443 196H646v1H443zM443 199H646v1H443zM443 203H646v1H443zM443 207H646v1H443zM443 211H646v1H443zM443 215H646v1H443zM443 219H646v1H443zM443 222H646v1H443zM443 226H646v1H443zM443 230H646v1H443zM443 234H646v1H443zM443 238H646v1H443zM443 242H646v1H443zM443 246H646v1H443zM443 249H646v1H443zM443 253H646v1H443zM443 257H646v1H443zM443 261H646v1H443zM443 265H646v1H443zM443 269H646v1H443zM443 272H646v1H443zM443 276H646v1H443zM443 280H646v1H443zM443 284H646v1H443zM443 288H646v1H443zM443 292H646v1H443zM443 295H646v1H443zM443 299H646v1H443zM443 303H646v1H443zM443 307H646v1H443zM443 311H646v1H443zM443 315H646v1H443zM443 318H646v1H443zM443 322H646v1H443zM443 326H646v1H443zM443 330H646v1H443zM443 334H646v1H443zM443 338H646v1H443zM443 341H646v1H443zM443 345H646v1H443zM443 349H646v1H443zM443 353H646v1H443zM443 357H646v1H443zM443 361H646v1H443zM443 365H646v1H443zM443 368H646v1H443zM443 372H646v1H443zM443 376H646v1H443zM443 380H646v1H443zM443 384H646v1H443zM443 388H646v1H443zM443 391H646v1H443zM443 395H646v1H443zM443 399H646v1H443zM443 403H646v1H443zM443 407H646v1H443zM443 411H646v1H443zM443 414H646v1H443zM443 418H646v1H443zM443 422H646v1H443zM443 426H646v1H443zM443 430H646v1H443zM443 434H646v1H443zM443 437H646v1H443zM443 441H646v1H443zM443 445H646v1H443zM443 449H646v1H443zM443 453H646v1H443zM443 457H646v1H443zM443 460H646v1H443zM443 464H646v1H443zM443 468H646v1H443zM443 472H646v1H443zM443 476H646v1H443zM443 480H646v1H443zM443 483H646v1H443zM443 487H646v1H443zM443 491H646v1H443zM443 495H646v1H443zM443 499H646v1H443zM443 503H646v1H443zM443 507H646v1H443zM443 510H646v1H443zM443 514H646v1H443zM443 518H646v1H443zM443 522H646v1H443zM443 526H646v1H443zM443 530H646v1H443zM443 533H646v1H443zM443 537H646v1H443zM443 541H646v1H443zM443 545H646v1H443zM443 549H646v1H443zM443 553H646v1H443zM443 556H646v1H443zM443 560H646v1H443zM443 564H646v1H443zM443 568H646v1H443zM443 572H646v1H443zM443 576H646v1H443zM443 579H646v1H443zM443 583H646v1H443zM443 587H646v1H443zM443 591H646v1H443zM443 595H646v1H443zM443 599H646v1H443zM443 602H646v1H443zM443 606H646v1H443zM443 610H646v1H443z" fill="url(#dp1B)"/><path d="M211 111h8v1h-8zM269 111h8v1h-8zM326 111h8v1h-8zM384 111h8v1h-8zM441 111h8v1h-8zM499 111h8v1h-8zM556 111h9v1h-9zM614 111h8v1h-8zM211 115h3v1h-3zM269 115h3v1h-3zM326 115h4v1h-4zM384 115h3v1h-3zM441 115h4v1h-4zM499 115h3v1h-3zM556 115h4v1h-4zM614 115h3v1h-3zM197 138h8v1h-8zM221 138h8v1h-8zM254 138h8v1h-8zM278 138h8v1h-8zM312 138h8v1h-8zM336 138h8v1h-8zM369 138h9v1h-9zM393 138h9v1h-9zM427 138h8v1h-8zM451 138h8v1h-8zM484 138h9v1h-9zM508 138h9v1h-9zM542 138h8v1h-8zM566 138h8v1h-8zM600 138h8v1h-8zM624 138h8v1h-8zM197 142h13v1h-13zM221 142h13v1h-13zM254 142h13v1h-13zM278 142h13v1h-13zM312 142h13v1h-13zM336 142h13v1h-13zM369 142h13v1h-13zM393 142h13v1h-13zM427 142h13v1h-13zM451 142h13v1h-13zM484 142h13v1h-13zM508 142h13v1h-13zM542 142h13v1h-13zM566 142h13v1h-13zM600 142h13v1h-13zM624 142h13v1h-13zM197 146h32v1h-32zM254 146h32v1h-32zM312 146h32v1h-32zM369 146h33v1h-33zM427 146h32v1h-32zM484 146h33v1h-33zM542 146h32v1h-32zM600 146h32v1h-32zM201 150h28v1h-28zM259 150h27v1h-27zM317 150h27v1h-27zM374 150h28v1h-28zM432 150h27v1h-27zM489 150h28v1h-28zM547 150h27v1h-27zM604 150h28v1h-28zM201 153h23v1h-23zM259 153h23v1h-23zM317 153h22v1h-22zM374 153h23v1h-23zM432 153h22v1h-22zM489 153h23v1h-23zM547 153h22v1h-22zM604 153h23v1h-23zM206 157h18v1h-18zM264 157h18v1h-18zM321 157h18v1h-18zM379 157h18v1h-18zM437 157h17v1h-17zM494 157h18v1h-18zM552 157h17v1h-17zM609 157h18v1h-18zM206 161h13v1h-13zM264 161h13v1h-13zM321 161h13v1h-13zM379 161h13v1h-13zM437 161h12v1h-12zM494 161h13v1h-13zM552 161h13v1h-13zM609 161h13v1h-13zM211 165h8v1h-8zM269 165h8v1h-8zM326 165h8v1h-8zM384 165h8v1h-8zM441 165h8v1h-8zM499 165h8v1h-8zM556 165h9v1h-9zM614 165h8v1h-8zM211 169h3v1h-3zM269 169h3v1h-3zM326 169h4v1h-4zM384 169h3v1h-3zM441 169h4v1h-4zM499 169h3v1h-3zM556 169h4v1h-4zM614 169h3v1h-3zM197 192h8v1h-8zM221 192h8v1h-8zM254 192h8v1h-8zM278 192h8v1h-8zM312 192h8v1h-8zM336 192h8v1h-8zM369 192h9v1h-9zM393 192h9v1h-9zM427 192h8v1h-8zM451 192h8v1h-8zM484 192h9v1h-9zM508 192h9v1h-9zM542 192h8v1h-8zM566 192h8v1h-8zM600 192h8v1h-8zM624 192h8v1h-8zM197 196h13v1h-13zM221 196h13v1h-13zM254 196h13v1h-13zM278 196h13v1h-13zM312 196h13v1h-13zM336 196h13v1h-13zM369 196h13v1h-13zM393 196h13v1h-13zM427 196h13v1h-13zM451 196h13v1h-13zM484 196h13v1h-13zM508 196h13v1h-13zM542 196h13v1h-13zM566 196h13v1h-13zM600 196h13v1h-13zM624 196h13v1h-13zM197 199h32v1h-32zM254 199h32v1h-32zM312 199h32v1h-32zM369 199h33v1h-33zM427 199h32v1h-32zM484 199h33v1h-33zM542 199h32v1h-32zM600 199h32v1h-32zM201 203h28v1h-28zM259 203h27v1h-27zM317 203h27v1h-27zM374 203h28v1h-28zM432 203h27v1h-27zM489 203h28v1h-28zM547 203h27v1h-27zM604 203h28v1h-28zM201 207h23v1h-23zM259 207h23v1h-23zM317 207h22v1h-22zM374 207h23v1h-23zM432 207h22v1h-22zM489 207h23v1h-23zM547 207h22v1h-22zM604 207h23v1h-23zM206 211h18v1h-18zM264 211h18v1h-18zM321 211h18v1h-18zM379 211h18v1h-18zM437 211h17v1h-17zM494 211h18v1h-18zM552 211h17v1h-17zM609 211h18v1h-18zM206 215h13v1h-13zM264 215h13v1h-13zM321 215h13v1h-13zM379 215h13v1h-13zM437 215h12v1h-12zM494 215h13v1h-13zM552 215h13v1h-13zM609 215h13v1h-13zM211 219h8v1h-8zM269 219h8v1h-8zM326 219h8v1h-8zM384 219h8v1h-8zM441 219h8v1h-8zM499 219h8v1h-8zM556 219h9v1h-9zM614 219h8v1h-8zM211 222h3v1h-3zM269 222h3v1h-3zM326 222h4v1h-4zM384 222h3v1h-3zM441 222h4v1h-4zM499 222h3v1h-3zM556 222h4v1h-4zM614 222h3v1h-3zM197 246h8v1h-8zM221 246h8v1h-8zM254 246h8v1h-8zM278 246h8v1h-8zM312 246h8v1h-8zM336 246h8v1h-8zM369 246h9v1h-9zM393 246h9v1h-9zM427 246h8v1h-8zM451 246h8v1h-8zM484 246h9v1h-9zM508 246h9v1h-9zM542 246h8v1h-8zM566 246h8v1h-8zM600 246h8v1h-8zM624 246h8v1h-8zM197 249h13v1h-13zM221 249h13v1h-13zM254 249h13v1h-13zM278 249h13v1h-13zM312 249h13v1h-13zM336 249h13v1h-13zM369 249h13v1h-13zM393 249h13v1h-13zM427 249h13v1h-13zM451 249h13v1h-13zM484 249h13v1h-13zM508 249h13v1h-13zM542 249h13v1h-13zM566 249h13v1h-13zM600 249h13v1h-13zM624 249h13v1h-13zM197 253h32v1h-32zM254 253h32v1h-32zM312 253h32v1h-32zM369 253h33v1h-33zM427 253h32v1h-32zM484 253h33v1h-33zM542 253h32v1h-32zM600 253h32v1h-32zM201 257h28v1h-28zM259 257h27v1h-27zM317 257h27v1h-27zM374 257h28v1h-28zM432 257h27v1h-27zM489 257h28v1h-28zM547 257h27v1h-27zM604 257h28v1h-28zM201 261h23v1h-23zM259 261h23v1h-23zM317 261h22v1h-22zM374 261h23v1h-23zM432 261h22v1h-22zM489 261h23v1h-23zM547 261h22v1h-22zM604 261h23v1h-23zM206 265h18v1h-18zM264 265h18v1h-18zM321 265h18v1h-18zM379 265h18v1h-18zM437 265h17v1h-17zM494 265h18v1h-18zM552 265h17v1h-17zM609 265h18v1h-18zM206 269h13v1h-13zM264 269h13v1h-13zM321 269h13v1h-13zM379 269h13v1h-13zM437 269h12v1h-12zM494 269h13v1h-13zM552 269h13v1h-13zM609 269h13v1h-13zM211 272h8v1h-8zM269 272h8v1h-8zM326 272h8v1h-8zM384 272h8v1h-8zM441 272h8v1h-8zM499 272h8v1h-8zM556 272h9v1h-9zM614 272h8v1h-8zM211 276h3v1h-3zM269 276h3v1h-3zM326 276h4v1h-4zM384 276h3v1h-3zM441 276h4v1h-4zM499 276h3v1h-3zM556 276h4v1h-4zM614 276h3v1h-3zM197 299h8v1h-8zM221 299h8v1h-8zM254 299h8v1h-8zM278 299h8v1h-8zM312 299h8v1h-8zM336 299h8v1h-8zM369 299h9v1h-9zM393 299h9v1h-9zM427 299h8v1h-8zM451 299h8v1h-8zM484 299h9v1h-9zM508 299h9v1h-9zM542 299h8v1h-8zM566 299h8v1h-8zM600 299h8v1h-8zM624 299h8v1h-8zM197 303h13v1h-13zM221 303h13v1h-13zM254 303h13v1h-13zM278 303h13v1h-13zM312 303h13v1h-13zM336 303h13v1h-13zM369 303h13v1h-13zM393 303h13v1h-13zM427 303h13v1h-13zM451 303h13v1h-13zM484 303h13v1h-13zM508 303h13v1h-13zM542 303h13v1h-13zM566 303h13v1h-13zM600 303h13v1h-13zM624 303h13v1h-13zM197 307h32v1h-32zM254 307h32v1h-32zM312 307h32v1h-32zM369 307h33v1h-33zM427 307h32v1h-32zM484 307h33v1h-33zM542 307h32v1h-32zM600 307h32v1h-32zM201 311h28v1h-28zM259 311h27v1h-27zM317 311h27v1h-27zM374 311h28v1h-28zM432 311h27v1h-27zM489 311h28v1h-28zM547 311h27v1h-27zM604 311h28v1h-28zM201 315h23v1h-23zM259 315h23v1h-23zM317 315h22v1h-22zM374 315h23v1h-23zM432 315h22v1h-22zM489 315h23v1h-23zM547 315h22v1h-22zM604 315h23v1h-23zM206 318h18v1h-18zM264 318h18v1h-18zM321 318h18v1h-18zM379 318h18v1h-18zM437 318h17v1h-17zM494 318h18v1h-18zM552 318h17v1h-17zM609 318h18v1h-18zM206 322h13v1h-13zM264 322h13v1h-13zM321 322h13v1h-13zM379 322h13v1h-13zM437 322h12v1h-12zM494 322h13v1h-13zM552 322h13v1h-13zM609 322h13v1h-13zM211 326h8v1h-8zM269 326h8v1h-8zM326 326h8v1h-8zM384 326h8v1h-8zM441 326h8v1h-8zM499 326h8v1h-8zM556 326h9v1h-9zM614 326h8v1h-8zM211 330h3v1h-3zM269 330h3v1h-3zM326 330h4v1h-4zM384 330h3v1h-3zM441 330h4v1h-4zM499 330h3v1h-3zM556 330h4v1h-4zM614 330h3v1h-3zM197 353h8v1h-8zM221 353h8v1h-8zM254 353h8v1h-8zM278 353h8v1h-8zM312 353h8v1h-8zM336 353h8v1h-8zM369 353h9v1h-9zM393 353h9v1h-9zM427 353h8v1h-8zM451 353h8v1h-8zM484 353h9v1h-9zM508 353h9v1h-9zM542 353h8v1h-8zM566 353h8v1h-8zM600 353h8v1h-8zM624 353h8v1h-8zM197 357h13v1h-13zM221 357h13v1h-13zM254 357h13v1h-13zM278 357h13v1h-13zM312 357h13v1h-13zM336 357h13v1h-13zM369 357h13v1h-13zM393 357h13v1h-13zM427 357h13v1h-13zM451 357h13v1h-13zM484 357h13v1h-13zM508 357h13v1h-13zM542 357h13v1h-13zM566 357h13v1h-13zM600 357h13v1h-13zM624 357h13v1h-13zM197 361h32v1h-32zM254 361h32v1h-32zM312 361h32v1h-32zM369 361h33v1h-33zM427 361h32v1h-32zM484 361h33v1h-33zM542 361h32v1h-32zM600 361h32v1h-32zM201 365h28v1h-28zM259 365h27v1h-27zM317 365h27v1h-27zM374 365h28v1h-28zM432 365h27v1h-27zM489 365h28v1h-28zM547 365h27v1h-27zM604 365h28v1h-28zM201 368h23v1h-23zM259 368h23v1h-23zM317 368h22v1h-22zM374 368h23v1h-23zM432 368h22v1h-22zM489 368h23v1h-23zM547 368h22v1h-22zM604 368h23v1h-23zM206 372h18v1h-18zM264 372h18v1h-18zM321 372h18v1h-18zM379 372h18v1h-18zM437 372h17v1h-17zM494 372h18v1h-18zM552 372h17v1h-17zM609 372h18v1h-18zM206 376h13v1h-13zM264 376h13v1h-13zM321 376h13v1h-13zM379 376h13v1h-13zM437 376h12v1h-12zM494 376h13v1h-13zM552 376h13v1h-13zM609 376h13v1h-13zM211 380h8v1h-8zM269 380h8v1h-8zM326 380h8v1h-8zM384 380h8v1h-8zM441 380h8v1h-8zM499 380h8v1h-8zM556 380h9v1h-9zM614 380h8v1h-8zM211 384h3v1h-3zM269 384h3v1h-3zM326 384h4v1h-4zM384 384h3v1h-3zM441 384h4v1h-4zM499 384h3v1h-3zM556 384h4v1h-4zM614 384h3v1h-3zM197 407h8v1h-8zM221 407h8v1h-8zM254 407h8v1h-8zM278 407h8v1h-8zM312 407h8v1h-8zM336 407h8v1h-8zM369 407h9v1h-9zM393 407h9v1h-9zM427 407h8v1h-8zM451 407h8v1h-8zM484 407h9v1h-9zM508 407h9v1h-9zM542 407h8v1h-8zM566 407h8v1h-8zM600 407h8v1h-8zM624 407h8v1h-8zM197 411h13v1h-13zM221 411h13v1h-13zM254 411h13v1h-13zM278 411h13v1h-13zM312 411h13v1h-13zM336 411h13v1h-13zM369 411h13v1h-13zM393 411h13v1h-13zM427 411h13v1h-13zM451 411h13v1h-13zM484 411h13v1h-13zM508 411h13v1h-13zM542 411h13v1h-13zM566 411h13v1h-13zM600 411h13v1h-13zM624 411h13v1h-13zM197 414h32v1h-32zM254 414h32v1h-32zM312 414h32v1h-32zM369 414h33v1h-33zM427 414h32v1h-32zM484 414h33v1h-33zM542 414h32v1h-32zM600 414h32v1h-32zM201 418h28v1h-28zM259 418h27v1h-27zM317 418h27v1h-27zM374 418h28v1h-28zM432 418h27v1h-27zM489 418h28v1h-28zM547 418h27v1h-27zM604 418h28v1h-28zM201 422h23v1h-23zM259 422h23v1h-23zM317 422h22v1h-22zM374 422h23v1h-23zM432 422h22v1h-22zM489 422h23v1h-23zM547 422h22v1h-22zM604 422h23v1h-23zM206 426h18v1h-18zM264 426h18v1h-18zM321 426h18v1h-18zM379 426h18v1h-18zM437 426h17v1h-17zM494 426h18v1h-18zM552 426h17v1h-17zM609 426h18v1h-18zM206 430h13v1h-13zM264 430h13v1h-13zM321 430h13v1h-13zM379 430h13v1h-13zM437 430h12v1h-12zM494 430h13v1h-13zM552 430h13v1h-13zM609 430h13v1h-13zM211 434h8v1h-8zM269 434h8v1h-8zM326 434h8v1h-8zM384 434h8v1h-8zM441 434h8v1h-8zM499 434h8v1h-8zM556 434h9v1h-9zM614 434h8v1h-8zM211 437h3v1h-3zM269 437h3v1h-3zM326 437h4v1h-4zM384 437h3v1h-3zM441 437h4v1h-4zM499 437h3v1h-3zM556 437h4v1h-4zM614 437h3v1h-3zM197 460h8v1h-8zM221 460h8v1h-8zM254 460h8v1h-8zM278 460h8v1h-8zM312 460h8v1h-8zM336 460h8v1h-8zM369 460h9v1h-9zM393 460h9v1h-9zM427 460h8v1h-8zM451 460h8v1h-8zM484 460h9v1h-9zM508 460h9v1h-9zM542 460h8v1h-8zM566 460h8v1h-8zM600 460h8v1h-8zM624 460h8v1h-8zM197 464h13v1h-13zM221 464h13v1h-13zM254 464h13v1h-13zM278 464h13v1h-13zM312 464h13v1h-13zM336 464h13v1h-13zM369 464h13v1h-13zM393 464h13v1h-13zM427 464h13v1h-13zM451 464h13v1h-13zM484 464h13v1h-13zM508 464h13v1h-13zM542 464h13v1h-13zM566 464h13v1h-13zM600 464h13v1h-13zM624 464h13v1h-13zM197 468h32v1h-32zM254 468h32v1h-32zM312 468h32v1h-32zM369 468h33v1h-33zM427 468h32v1h-32zM484 468h33v1h-33zM542 468h32v1h-32zM600 468h32v1h-32zM201 472h28v1h-28zM259 472h27v1h-27zM317 472h27v1h-27zM374 472h28v1h-28zM432 472h27v1h-27zM489 472h28v1h-28zM547 472h27v1h-27zM604 472h28v1h-28zM201 476h23v1h-23zM259 476h23v1h-23zM317 476h22v1h-22zM374 476h23v1h-23zM432 476h22v1h-22zM489 476h23v1h-23zM547 476h22v1h-22zM604 476h23v1h-23zM206 480h18v1h-18zM264 480h18v1h-18zM321 480h18v1h-18zM379 480h18v1h-18zM437 480h17v1h-17zM494 480h18v1h-18zM552 480h17v1h-17zM609 480h18v1h-18zM206 483h13v1h-13zM264 483h13v1h-13zM321 483h13v1h-13zM379 483h13v1h-13zM437 483h12v1h-12zM494 483h13v1h-13zM552 483h13v1h-13zM609 483h13v1h-13zM211 487h8v1h-8zM269 487h8v1h-8zM326 487h8v1h-8zM384 487h8v1h-8zM441 487h8v1h-8zM499 487h8v1h-8zM556 487h9v1h-9zM614 487h8v1h-8zM211 491h3v1h-3zM269 491h3v1h-3zM326 491h4v1h-4zM384 491h3v1h-3zM441 491h4v1h-4zM499 491h3v1h-3zM556 491h4v1h-4zM614 491h3v1h-3zM197 518h8v1h-8zM221 518h8v1h-8zM254 518h8v1h-8zM278 518h8v1h-8zM312 518h8v1h-8zM336 518h8v1h-8zM369 518h9v1h-9zM393 518h9v1h-9zM427 518h8v1h-8zM451 518h8v1h-8zM484 518h9v1h-9zM508 518h9v1h-9zM542 518h8v1h-8zM566 518h8v1h-8zM600 518h8v1h-8zM624 518h8v1h-8zM197 522h13v1h-13zM221 522h13v1h-13zM254 522h13v1h-13zM278 522h13v1h-13zM312 522h13v1h-13zM336 522h13v1h-13zM369 522h13v1h-13zM393 522h13v1h-13zM427 522h13v1h-13zM451 522h13v1h-13zM484 522h13v1h-13zM508 522h13v1h-13zM542 522h13v1h-13zM566 522h13v1h-13zM600 522h13v1h-13zM624 522h13v1h-13zM197 526h32v1h-32zM254 526h32v1h-32zM312 526h32v1h-32zM369 526h33v1h-33zM427 526h32v1h-32zM484 526h33v1h-33zM542 526h32v1h-32zM600 526h32v1h-32zM201 530h28v1h-28zM259 530h27v1h-27zM317 530h27v1h-27zM374 530h28v1h-28zM432 530h27v1h-27zM489 530h28v1h-28zM547 530h27v1h-27zM604 530h28v1h-28zM201 533h23v1h-23zM259 533h23v1h-23zM317 533h22v1h-22zM374 533h23v1h-23zM432 533h22v1h-22zM489 533h23v1h-23zM547 533h22v1h-22zM604 533h23v1h-23zM206 537h18v1h-18zM264 537h18v1h-18zM321 537h18v1h-18zM379 537h18v1h-18zM437 537h17v1h-17zM494 537h18v1h-18zM552 537h17v1h-17zM609 537h18v1h-18zM206 541h13v1h-13zM264 541h13v1h-13zM321 541h13v1h-13zM379 541h13v1h-13zM437 541h12v1h-12zM494 541h13v1h-13zM552 541h13v1h-13zM609 541h13v1h-13zM211 545h8v1h-8zM269 545h8v1h-8zM326 545h8v1h-8zM384 545h8v1h-8zM441 545h8v1h-8zM499 545h8v1h-8zM556 545h9v1h-9zM614 545h8v1h-8zM211 549h3v1h-3zM269 549h3v1h-3zM326 549h4v1h-4zM384 549h3v1h-3zM441 549h4v1h-4zM499 549h3v1h-3zM556 549h4v1h-4zM614 549h3v1h-3zM197 572h8v1h-8zM221 572h8v1h-8zM254 572h8v1h-8zM278 572h8v1h-8zM312 572h8v1h-8zM336 572h8v1h-8zM369 572h9v1h-9zM393 572h9v1h-9zM427 572h8v1h-8zM451 572h8v1h-8zM484 572h9v1h-9zM508 572h9v1h-9zM542 572h8v1h-8zM566 572h8v1h-8zM600 572h8v1h-8zM624 572h8v1h-8zM197 576h13v1h-13zM221 576h13v1h-13zM254 576h13v1h-13zM278 576h13v1h-13zM312 576h13v1h-13zM336 576h13v1h-13zM369 576h13v1h-13zM393 576h13v1h-13zM427 576h13v1h-13zM451 576h13v1h-13zM484 576h13v1h-13zM508 576h13v1h-13zM542 576h13v1h-13zM566 576h13v1h-13zM600 576h13v1h-13zM624 576h13v1h-13zM197 579h32v1h-32zM254 579h32v1h-32zM312 579h32v1h-32zM369 579h33v1h-33zM427 579h32v1h-32zM484 579h33v1h-33zM542 579h32v1h-32zM600 579h32v1h-32zM201 583h28v1h-28zM259 583h27v1h-27zM317 583h27v1h-27zM374 583h28v1h-28zM432 583h27v1h-27zM489 583h28v1h-28zM547 583h27v1h-27zM604 583h28v1h-28zM201 587h23v1h-23zM259 587h23v1h-23zM317 587h22v1h-22zM374 587h23v1h-23zM432 587h22v1h-22zM489 587h23v1h-23zM547 587h22v1h-22zM604 587h23v1h-23zM206 591h18v1h-18zM264 591h18v1h-18zM321 591h18v1h-18zM379 591h18v1h-18zM437 591h17v1h-17zM494 591h18v1h-18zM552 591h17v1h-17zM609 591h18v1h-18zM206 595h13v1h-13zM264 595h13v1h-13zM321 595h13v1h-13zM379 595h13v1h-13zM437 595h12v1h-12zM494 595h13v1h-13zM552 595h13v1h-13zM609 595h13v1h-13zM211 599h8v1h-8zM269 599h8v1h-8zM326 599h8v1h-8zM384 599h8v1h-8zM441 599h8v1h-8zM499 599h8v1h-8zM556 599h9v1h-9zM614 599h8v1h-8zM211 602h3v1h-3zM269 602h3v1h-3zM326 602h4v1h-4zM384 602h3v1h-3zM441 602h4v1h-4zM499 602h3v1h-3zM556 602h4v1h-4zM614 602h3v1h-3z" fill="#ff8080"/></g><path d="M185 498 185 160 199 160 199 156 214 156 214 152 228 152 228 149 243 149 243 145 257 145 257 141 271 141 271 137 288 137 288 133 303 133 303 129 317 129 317 126 331 126 331 122 346 122 346 118 360 118 360 114 376 114 376 118 378 118 378 121 381 121 381 125 384 125 384 129 386 129 386 132 388 132 388 136 391 136 391 140 394 140 394 144 396 144 396 147 398 147 398 151 401 151 401 155 404 155 404 158 406 158 406 162 408 162 408 166 411 166 411 169 414 169 414 173 416 173 418 173 418 169 421 169 421 166 424 166 424 162 426 162 426 158 428 158 428 155 431 155 431 151 434 151 434 147 436 147 436 144 438 144 438 140 441 140 441 136 444 136 444 132 446 132 446 129 448 129 448 125 451 125 451 121 454 121 454 118 456 118 456 114 471 114 471 116 485 116 485 120 500 120 500 124 514 124 514 127 528 127 528 131 543 131 543 135 560 135 560 139 574 139 574 143 588 143 588 147 603 147 603 150 617 150 617 154 632 154 632 158 646 158 646 496 590 496 590 557 538 557 538 613 293 613 293 555 240 555 240 498Z" fill="none" stroke="#3e2a2a" stroke-width="1" transform="translate(0.5 0.5)"/><g clip-path="url(#cp2)"><path d="M722 498 722 160 736 160 736 156 751 156 751 152 765 152 765 149 780 149 780 145 794 145 794 141 808 141 808 137 825 137 825 133 840 133 840 129 854 129 854 126 868 126 868 122 883 122 883 118 897 118 897 114 913 114 913 118 915 118 915 122 918 122 918 125 920 125 920 129 923 129 923 133 925 133 925 137 928 137 928 141 930 141 930 144 932 144 932 148 935 148 935 152 937 152 937 156 940 156 940 160 942 160 942 164 945 164 945 167 947 167 947 171 950 171 950 175 952 175 952 613 830 613 830 555 777 555 777 498Z" fill="#ff8080"/><path d="M722 113H952v1H722zM722 117H952v1H722zM722 121H952v1H722zM722 125H952v1H722zM722 129H952v1H722zM722 132H952v1H722zM722 136H952v1H722zM722 140H952v1H722zM722 144H952v1H722zM722 148H952v1H722zM722 152H952v1H722zM722 155H952v1H722zM722 159H952v1H722zM722 163H952v1H722zM722 167H952v1H722zM722 171H952v1H722zM722 175H952v1H722zM722 178H952v1H722zM722 182H952v1H722zM722 186H952v1H722zM722 190H952v1H722zM722 194H952v1H722zM722 198H952v1H722zM722 201H952v1H722zM722 205H952v1H722zM722 209H952v1H722zM722 213H952v1H722zM722 217H952v1H722zM722 221H952v1H722zM722 224H952v1H722zM722 228H952v1H722zM722 232H952v1H722zM722 236H952v1H722zM722 240H952v1H722zM722 244H952v1H722zM722 248H952v1H722zM722 251H952v1H722zM722 255H952v1H722zM722 259H952v1H722zM722 263H952v1H722zM722 267H952v1H722zM722 271H952v1H722zM722 274H952v1H722zM722 278H952v1H722zM722 282H952v1H722zM722 286H952v1H722zM722 290H952v1H722zM722 294H952v1H722zM722 297H952v1H722zM722 301H952v1H722zM722 305H952v1H722zM722 309H952v1H722zM722 313H952v1H722zM722 317H952v1H722zM722 320H952v1H722zM722 324H952v1H722zM722 328H952v1H722zM722 332H952v1H722zM722 336H952v1H722zM722 340H952v1H722zM722 343H952v1H722zM722 347H952v1H722zM722 351H952v1H722zM722 355H952v1H722zM722 359H952v1H722zM722 363H952v1H722zM722 367H952v1H722zM722 370H952v1H722zM722 374H952v1H722zM722 378H952v1H722zM722 382H952v1H722zM722 386H952v1H722zM722 390H952v1H722zM722 393H952v1H722zM722 397H952v1H722zM722 401H952v1H722zM722 405H952v1H722zM722 409H952v1H722zM722 413H952v1H722zM722 416H952v1H722zM722 420H952v1H722zM722 424H952v1H722zM722 428H952v1H722zM722 432H952v1H722zM722 436H952v1H722zM722 439H952v1H722zM722 443H952v1H722zM722 447H952v1H722zM722 451H952v1H722zM722 455H952v1H722zM722 459H952v1H722zM722 462H952v1H722zM722 466H952v1H722zM722 470H952v1H722zM722 474H952v1H722zM722 478H952v1H722zM722 482H952v1H722zM722 485H952v1H722zM722 489H952v1H722zM722 493H952v1H722zM722 497H952v1H722zM722 501H952v1H722zM722 505H952v1H722zM722 509H952v1H722zM722 512H952v1H722zM722 516H952v1H722zM722 520H952v1H722zM722 524H952v1H722zM722 528H952v1H722zM722 532H952v1H722zM722 535H952v1H722zM722 539H952v1H722zM722 543H952v1H722zM722 547H952v1H722zM722 551H952v1H722zM722 555H952v1H722zM722 558H952v1H722zM722 562H952v1H722zM722 566H952v1H722zM722 570H952v1H722zM722 574H952v1H722zM722 578H952v1H722zM722 581H952v1H722zM722 585H952v1H722zM722 589H952v1H722zM722 593H952v1H722zM722 597H952v1H722zM722 601H952v1H722zM722 604H952v1H722zM722 608H952v1H722zM722 612H952v1H722z" fill="url(#dp2A)"/><path d="M748 113h8v1h-8zM806 113h8v1h-8zM863 113h8v1h-8zM921 113h8v1h-8zM748 117h3v1h-3zM806 117h3v1h-3zM863 117h4v1h-4zM921 117h3v1h-3zM734 140h8v1h-8zM758 140h8v1h-8zM791 140h8v1h-8zM815 140h8v1h-8zM849 140h8v1h-8zM873 140h8v1h-8zM906 140h9v1h-9zM930 140h9v1h-9zM734 144h13v1h-13zM758 144h13v1h-13zM791 144h13v1h-13zM815 144h13v1h-13zM849 144h13v1h-13zM873 144h13v1h-13zM906 144h13v1h-13zM930 144h13v1h-13zM734 148h32v1h-32zM791 148h32v1h-32zM849 148h32v1h-32zM906 148h33v1h-33zM738 152h28v1h-28zM796 152h27v1h-27zM854 152h27v1h-27zM911 152h28v1h-28zM738 155h23v1h-23zM796 155h23v1h-23zM854 155h22v1h-22zM911 155h23v1h-23zM743 159h18v1h-18zM801 159h18v1h-18zM858 159h18v1h-18zM916 159h18v1h-18zM743 163h13v1h-13zM801 163h13v1h-13zM858 163h13v1h-13zM916 163h13v1h-13zM748 167h8v1h-8zM806 167h8v1h-8zM863 167h8v1h-8zM921 167h8v1h-8zM748 171h3v1h-3zM806 171h3v1h-3zM863 171h4v1h-4zM921 171h3v1h-3zM734 194h8v1h-8zM758 194h8v1h-8zM791 194h8v1h-8zM815 194h8v1h-8zM849 194h8v1h-8zM873 194h8v1h-8zM906 194h9v1h-9zM930 194h9v1h-9zM734 198h13v1h-13zM758 198h13v1h-13zM791 198h13v1h-13zM815 198h13v1h-13zM849 198h13v1h-13zM873 198h13v1h-13zM906 198h13v1h-13zM930 198h13v1h-13zM734 201h32v1h-32zM791 201h32v1h-32zM849 201h32v1h-32zM906 201h33v1h-33zM738 205h28v1h-28zM796 205h27v1h-27zM854 205h27v1h-27zM911 205h28v1h-28zM738 209h23v1h-23zM796 209h23v1h-23zM854 209h22v1h-22zM911 209h23v1h-23zM743 213h18v1h-18zM801 213h18v1h-18zM858 213h18v1h-18zM916 213h18v1h-18zM743 217h13v1h-13zM801 217h13v1h-13zM858 217h13v1h-13zM916 217h13v1h-13zM748 221h8v1h-8zM806 221h8v1h-8zM863 221h8v1h-8zM921 221h8v1h-8zM748 224h3v1h-3zM806 224h3v1h-3zM863 224h4v1h-4zM921 224h3v1h-3zM734 248h8v1h-8zM758 248h8v1h-8zM791 248h8v1h-8zM815 248h8v1h-8zM849 248h8v1h-8zM873 248h8v1h-8zM906 248h9v1h-9zM930 248h9v1h-9zM734 251h13v1h-13zM758 251h13v1h-13zM791 251h13v1h-13zM815 251h13v1h-13zM849 251h13v1h-13zM873 251h13v1h-13zM906 251h13v1h-13zM930 251h13v1h-13zM734 255h32v1h-32zM791 255h32v1h-32zM849 255h32v1h-32zM906 255h33v1h-33zM738 259h28v1h-28zM796 259h27v1h-27zM854 259h27v1h-27zM911 259h28v1h-28zM738 263h23v1h-23zM796 263h23v1h-23zM854 263h22v1h-22zM911 263h23v1h-23zM743 267h18v1h-18zM801 267h18v1h-18zM858 267h18v1h-18zM916 267h18v1h-18zM743 271h13v1h-13zM801 271h13v1h-13zM858 271h13v1h-13zM916 271h13v1h-13zM748 274h8v1h-8zM806 274h8v1h-8zM863 274h8v1h-8zM921 274h8v1h-8zM748 278h3v1h-3zM806 278h3v1h-3zM863 278h4v1h-4zM921 278h3v1h-3zM734 301h8v1h-8zM758 301h8v1h-8zM791 301h8v1h-8zM815 301h8v1h-8zM849 301h8v1h-8zM873 301h8v1h-8zM906 301h9v1h-9zM930 301h9v1h-9zM734 305h13v1h-13zM758 305h13v1h-13zM791 305h13v1h-13zM815 305h13v1h-13zM849 305h13v1h-13zM873 305h13v1h-13zM906 305h13v1h-13zM930 305h13v1h-13zM734 309h32v1h-32zM791 309h32v1h-32zM849 309h32v1h-32zM906 309h33v1h-33zM738 313h28v1h-28zM796 313h27v1h-27zM854 313h27v1h-27zM911 313h28v1h-28zM738 317h23v1h-23zM796 317h23v1h-23zM854 317h22v1h-22zM911 317h23v1h-23zM743 320h18v1h-18zM801 320h18v1h-18zM858 320h18v1h-18zM916 320h18v1h-18zM743 324h13v1h-13zM801 324h13v1h-13zM858 324h13v1h-13zM916 324h13v1h-13zM748 328h8v1h-8zM806 328h8v1h-8zM863 328h8v1h-8zM921 328h8v1h-8zM748 332h3v1h-3zM806 332h3v1h-3zM863 332h4v1h-4zM921 332h3v1h-3zM734 355h8v1h-8zM758 355h8v1h-8zM791 355h8v1h-8zM815 355h8v1h-8zM849 355h8v1h-8zM873 355h8v1h-8zM906 355h9v1h-9zM930 355h9v1h-9zM734 359h13v1h-13zM758 359h13v1h-13zM791 359h13v1h-13zM815 359h13v1h-13zM849 359h13v1h-13zM873 359h13v1h-13zM906 359h13v1h-13zM930 359h13v1h-13zM734 363h32v1h-32zM791 363h32v1h-32zM849 363h32v1h-32zM906 363h33v1h-33zM738 367h28v1h-28zM796 367h27v1h-27zM854 367h27v1h-27zM911 367h28v1h-28zM738 370h23v1h-23zM796 370h23v1h-23zM854 370h22v1h-22zM911 370h23v1h-23zM743 374h18v1h-18zM801 374h18v1h-18zM858 374h18v1h-18zM916 374h18v1h-18zM743 378h13v1h-13zM801 378h13v1h-13zM858 378h13v1h-13zM916 378h13v1h-13zM748 382h8v1h-8zM806 382h8v1h-8zM863 382h8v1h-8zM921 382h8v1h-8zM748 386h3v1h-3zM806 386h3v1h-3zM863 386h4v1h-4zM921 386h3v1h-3zM734 409h8v1h-8zM758 409h8v1h-8zM791 409h8v1h-8zM815 409h8v1h-8zM849 409h8v1h-8zM873 409h8v1h-8zM906 409h9v1h-9zM930 409h9v1h-9zM734 413h13v1h-13zM758 413h13v1h-13zM791 413h13v1h-13zM815 413h13v1h-13zM849 413h13v1h-13zM873 413h13v1h-13zM906 413h13v1h-13zM930 413h13v1h-13zM734 416h32v1h-32zM791 416h32v1h-32zM849 416h32v1h-32zM906 416h33v1h-33zM738 420h28v1h-28zM796 420h27v1h-27zM854 420h27v1h-27zM911 420h28v1h-28zM738 424h23v1h-23zM796 424h23v1h-23zM854 424h22v1h-22zM911 424h23v1h-23zM743 428h18v1h-18zM801 428h18v1h-18zM858 428h18v1h-18zM916 428h18v1h-18zM743 432h13v1h-13zM801 432h13v1h-13zM858 432h13v1h-13zM916 432h13v1h-13zM748 436h8v1h-8zM806 436h8v1h-8zM863 436h8v1h-8zM921 436h8v1h-8zM748 439h3v1h-3zM806 439h3v1h-3zM863 439h4v1h-4zM921 439h3v1h-3zM734 462h8v1h-8zM758 462h8v1h-8zM791 462h8v1h-8zM815 462h8v1h-8zM849 462h8v1h-8zM873 462h8v1h-8zM906 462h9v1h-9zM930 462h9v1h-9zM734 466h13v1h-13zM758 466h13v1h-13zM791 466h13v1h-13zM815 466h13v1h-13zM849 466h13v1h-13zM873 466h13v1h-13zM906 466h13v1h-13zM930 466h13v1h-13zM734 470h32v1h-32zM791 470h32v1h-32zM849 470h32v1h-32zM906 470h33v1h-33zM738 474h28v1h-28zM796 474h27v1h-27zM854 474h27v1h-27zM911 474h28v1h-28zM738 478h23v1h-23zM796 478h23v1h-23zM854 478h22v1h-22zM911 478h23v1h-23zM743 482h18v1h-18zM801 482h18v1h-18zM858 482h18v1h-18zM916 482h18v1h-18zM743 485h13v1h-13zM801 485h13v1h-13zM858 485h13v1h-13zM916 485h13v1h-13zM748 489h8v1h-8zM806 489h8v1h-8zM863 489h8v1h-8zM921 489h8v1h-8zM748 493h3v1h-3zM806 493h3v1h-3zM863 493h4v1h-4zM921 493h3v1h-3zM734 516h8v1h-8zM758 516h8v1h-8zM791 516h8v1h-8zM815 516h8v1h-8zM849 516h8v1h-8zM873 516h8v1h-8zM906 516h9v1h-9zM930 516h9v1h-9zM734 520h13v1h-13zM758 520h13v1h-13zM791 520h13v1h-13zM815 520h13v1h-13zM849 520h13v1h-13zM873 520h13v1h-13zM906 520h13v1h-13zM930 520h13v1h-13zM734 524h32v1h-32zM791 524h32v1h-32zM849 524h32v1h-32zM906 524h33v1h-33zM738 528h28v1h-28zM796 528h27v1h-27zM854 528h27v1h-27zM911 528h28v1h-28zM738 532h23v1h-23zM796 532h23v1h-23zM854 532h22v1h-22zM911 532h23v1h-23zM743 535h18v1h-18zM801 535h18v1h-18zM858 535h18v1h-18zM916 535h18v1h-18zM743 539h13v1h-13zM801 539h13v1h-13zM858 539h13v1h-13zM916 539h13v1h-13zM748 543h8v1h-8zM806 543h8v1h-8zM863 543h8v1h-8zM921 543h8v1h-8zM748 547h3v1h-3zM806 547h3v1h-3zM863 547h4v1h-4zM921 547h3v1h-3zM734 570h8v1h-8zM758 570h8v1h-8zM791 570h8v1h-8zM815 570h8v1h-8zM849 570h8v1h-8zM873 570h8v1h-8zM906 570h9v1h-9zM930 570h9v1h-9zM734 574h13v1h-13zM758 574h13v1h-13zM791 574h13v1h-13zM815 574h13v1h-13zM849 574h13v1h-13zM873 574h13v1h-13zM906 574h13v1h-13zM930 574h13v1h-13zM734 578h32v1h-32zM791 578h32v1h-32zM849 578h32v1h-32zM906 578h33v1h-33zM738 581h28v1h-28zM796 581h27v1h-27zM854 581h27v1h-27zM911 581h28v1h-28zM738 585h23v1h-23zM796 585h23v1h-23zM854 585h22v1h-22zM911 585h23v1h-23zM743 589h18v1h-18zM801 589h18v1h-18zM858 589h18v1h-18zM916 589h18v1h-18zM743 593h13v1h-13zM801 593h13v1h-13zM858 593h13v1h-13zM916 593h13v1h-13zM748 597h8v1h-8zM806 597h8v1h-8zM863 597h8v1h-8zM921 597h8v1h-8zM748 601h3v1h-3zM806 601h3v1h-3zM863 601h4v1h-4zM921 601h3v1h-3z" fill="#ff8080"/></g><path d="M722 498 722 160 736 160 736 156 751 156 751 152 765 152 765 149 780 149 780 145 794 145 794 141 808 141 808 137 825 137 825 133 840 133 840 129 854 129 854 126 868 126 868 122 883 122 883 118 897 118 897 114 913 114 913 118 915 118 915 122 918 122 918 125 920 125 920 129 923 129 923 133 925 133 925 137 928 137 928 141 930 141 930 144 932 144 932 148 935 148 935 152 937 152 937 156 940 156 940 160 942 160 942 164 945 164 945 167 947 167 947 171 950 171 950 175 952 175 952 613 830 613 830 555 777 555 777 498Z" fill="none" stroke="#3e2a2a" stroke-width="1" transform="translate(0.5 0.5)"/><g clip-path="url(#cp3)"><path d="M986 613 986 176 989 176 989 172 991 172 991 168 994 168 994 164 996 164 996 160 999 160 999 157 1002 157 1002 153 1004 153 1004 149 1007 149 1007 145 1010 145 1010 141 1012 141 1012 137 1015 137 1015 133 1018 133 1018 130 1020 130 1020 126 1023 126 1023 122 1025 122 1025 118 1028 118 1028 114 1042 114 1042 116 1054 116 1054 120 1068 120 1068 124 1083 124 1083 127 1095 127 1095 131 1108 131 1108 135 1123 135 1123 139 1135 139 1135 143 1149 143 1149 147 1161 147 1161 150 1177 150 1177 154 1191 154 1191 158 1203 158 1203 162 1216 162 1216 496 1161 496 1161 557 1108 557 1108 613Z" fill="#ff8080"/><path d="M986 111H1216v1H986zM986 115H1216v1H986zM986 119H1216v1H986zM986 123H1216v1H986zM986 127H1216v1H986zM986 130H1216v1H986zM986 134H1216v1H986zM986 138H1216v1H986zM986 142H1216v1H986zM986 146H1216v1H986zM986 150H1216v1H986zM986 153H1216v1H986zM986 157H1216v1H986zM986 161H1216v1H986zM986 165H1216v1H986zM986 169H1216v1H986zM986 173H1216v1H986zM986 176H1216v1H986zM986 180H1216v1H986zM986 184H1216v1H986zM986 188H1216v1H986zM986 192H1216v1H986zM986 196H1216v1H986zM986 199H1216v1H986zM986 203H1216v1H986zM986 207H1216v1H986zM986 211H1216v1H986zM986 215H1216v1H986zM986 219H1216v1H986zM986 222H1216v1H986zM986 226H1216v1H986zM986 230H1216v1H986zM986 234H1216v1H986zM986 238H1216v1H986zM986 242H1216v1H986zM986 246H1216v1H986zM986 249H1216v1H986zM986 253H1216v1H986zM986 257H1216v1H986zM986 261H1216v1H986zM986 265H1216v1H986zM986 269H1216v1H986zM986 272H1216v1H986zM986 276H1216v1H986zM986 280H1216v1H986zM986 284H1216v1H986zM986 288H1216v1H986zM986 292H1216v1H986zM986 295H1216v1H986zM986 299H1216v1H986zM986 303H1216v1H986zM986 307H1216v1H986zM986 311H1216v1H986zM986 315H1216v1H986zM986 318H1216v1H986zM986 322H1216v1H986zM986 326H1216v1H986zM986 330H1216v1H986zM986 334H1216v1H986zM986 338H1216v1H986zM986 341H1216v1H986zM986 345H1216v1H986zM986 349H1216v1H986zM986 353H1216v1H986zM986 357H1216v1H986zM986 361H1216v1H986zM986 365H1216v1H986zM986 368H1216v1H986zM986 372H1216v1H986zM986 376H1216v1H986zM986 380H1216v1H986zM986 384H1216v1H986zM986 388H1216v1H986zM986 391H1216v1H986zM986 395H1216v1H986zM986 399H1216v1H986zM986 403H1216v1H986zM986 407H1216v1H986zM986 411H1216v1H986zM986 414H1216v1H986zM986 418H1216v1H986zM986 422H1216v1H986zM986 426H1216v1H986zM986 430H1216v1H986zM986 434H1216v1H986zM986 437H1216v1H986zM986 441H1216v1H986zM986 445H1216v1H986zM986 449H1216v1H986zM986 453H1216v1H986zM986 457H1216v1H986zM986 460H1216v1H986zM986 464H1216v1H986zM986 468H1216v1H986zM986 472H1216v1H986zM986 476H1216v1H986zM986 480H1216v1H986zM986 483H1216v1H986zM986 487H1216v1H986zM986 491H1216v1H986zM986 495H1216v1H986zM986 499H1216v1H986zM986 503H1216v1H986zM986 507H1216v1H986zM986 510H1216v1H986zM986 514H1216v1H986zM986 518H1216v1H986zM986 522H1216v1H986zM986 526H1216v1H986zM986 530H1216v1H986zM986 533H1216v1H986zM986 537H1216v1H986zM986 541H1216v1H986zM986 545H1216v1H986zM986 549H1216v1H986zM986 553H1216v1H986zM986 556H1216v1H986zM986 560H1216v1H986zM986 564H1216v1H986zM986 568H1216v1H986zM986 572H1216v1H986zM986 576H1216v1H986zM986 579H1216v1H986zM986 583H1216v1H986zM986 587H1216v1H986zM986 591H1216v1H986zM986 595H1216v1H986zM986 599H1216v1H986zM986 602H1216v1H986zM986 606H1216v1H986zM986 610H1216v1H986z" fill="url(#dp3A)"/><path d="M1012 111h8v1h-8zM1070 111h8v1h-8zM1127 111h8v1h-8zM1185 111h8v1h-8zM1012 115h3v1h-3zM1070 115h3v1h-3zM1127 115h4v1h-4zM1185 115h3v1h-3zM998 138h8v1h-8zM1022 138h8v1h-8zM1055 138h8v1h-8zM1079 138h8v1h-8zM1113 138h8v1h-8zM1137 138h8v1h-8zM1170 138h9v1h-9zM1194 138h9v1h-9zM998 142h13v1h-13zM1022 142h13v1h-13zM1055 142h13v1h-13zM1079 142h13v1h-13zM1113 142h13v1h-13zM1137 142h13v1h-13zM1170 142h13v1h-13zM1194 142h13v1h-13zM998 146h32v1h-32zM1055 146h32v1h-32zM1113 146h32v1h-32zM1170 146h33v1h-33zM1002 150h28v1h-28zM1060 150h27v1h-27zM1118 150h27v1h-27zM1175 150h28v1h-28zM1002 153h23v1h-23zM1060 153h23v1h-23zM1118 153h22v1h-22zM1175 153h23v1h-23zM1007 157h18v1h-18zM1065 157h18v1h-18zM1122 157h18v1h-18zM1180 157h18v1h-18zM1007 161h13v1h-13zM1065 161h13v1h-13zM1122 161h13v1h-13zM1180 161h13v1h-13zM1012 165h8v1h-8zM1070 165h8v1h-8zM1127 165h8v1h-8zM1185 165h8v1h-8zM1012 169h3v1h-3zM1070 169h3v1h-3zM1127 169h4v1h-4zM1185 169h3v1h-3zM998 192h8v1h-8zM1022 192h8v1h-8zM1055 192h8v1h-8zM1079 192h8v1h-8zM1113 192h8v1h-8zM1137 192h8v1h-8zM1170 192h9v1h-9zM1194 192h9v1h-9zM998 196h13v1h-13zM1022 196h13v1h-13zM1055 196h13v1h-13zM1079 196h13v1h-13zM1113 196h13v1h-13zM1137 196h13v1h-13zM1170 196h13v1h-13zM1194 196h13v1h-13zM998 199h32v1h-32zM1055 199h32v1h-32zM1113 199h32v1h-32zM1170 199h33v1h-33zM1002 203h28v1h-28zM1060 203h27v1h-27zM1118 203h27v1h-27zM1175 203h28v1h-28zM1002 207h23v1h-23zM1060 207h23v1h-23zM1118 207h22v1h-22zM1175 207h23v1h-23zM1007 211h18v1h-18zM1065 211h18v1h-18zM1122 211h18v1h-18zM1180 211h18v1h-18zM1007 215h13v1h-13zM1065 215h13v1h-13zM1122 215h13v1h-13zM1180 215h13v1h-13zM1012 219h8v1h-8zM1070 219h8v1h-8zM1127 219h8v1h-8zM1185 219h8v1h-8zM1012 222h3v1h-3zM1070 222h3v1h-3zM1127 222h4v1h-4zM1185 222h3v1h-3zM998 246h8v1h-8zM1022 246h8v1h-8zM1055 246h8v1h-8zM1079 246h8v1h-8zM1113 246h8v1h-8zM1137 246h8v1h-8zM1170 246h9v1h-9zM1194 246h9v1h-9zM998 249h13v1h-13zM1022 249h13v1h-13zM1055 249h13v1h-13zM1079 249h13v1h-13zM1113 249h13v1h-13zM1137 249h13v1h-13zM1170 249h13v1h-13zM1194 249h13v1h-13zM998 253h32v1h-32zM1055 253h32v1h-32zM1113 253h32v1h-32zM1170 253h33v1h-33zM1002 257h28v1h-28zM1060 257h27v1h-27zM1118 257h27v1h-27zM1175 257h28v1h-28zM1002 261h23v1h-23zM1060 261h23v1h-23zM1118 261h22v1h-22zM1175 261h23v1h-23zM1007 265h18v1h-18zM1065 265h18v1h-18zM1122 265h18v1h-18zM1180 265h18v1h-18zM1007 269h13v1h-13zM1065 269h13v1h-13zM1122 269h13v1h-13zM1180 269h13v1h-13zM1012 272h8v1h-8zM1070 272h8v1h-8zM1127 272h8v1h-8zM1185 272h8v1h-8zM1012 276h3v1h-3zM1070 276h3v1h-3zM1127 276h4v1h-4zM1185 276h3v1h-3zM998 299h8v1h-8zM1022 299h8v1h-8zM1055 299h8v1h-8zM1079 299h8v1h-8zM1113 299h8v1h-8zM1137 299h8v1h-8zM1170 299h9v1h-9zM1194 299h9v1h-9zM998 303h13v1h-13zM1022 303h13v1h-13zM1055 303h13v1h-13zM1079 303h13v1h-13zM1113 303h13v1h-13zM1137 303h13v1h-13zM1170 303h13v1h-13zM1194 303h13v1h-13zM998 307h32v1h-32zM1055 307h32v1h-32zM1113 307h32v1h-32zM1170 307h33v1h-33zM1002 311h28v1h-28zM1060 311h27v1h-27zM1118 311h27v1h-27zM1175 311h28v1h-28zM1002 315h23v1h-23zM1060 315h23v1h-23zM1118 315h22v1h-22zM1175 315h23v1h-23zM1007 318h18v1h-18zM1065 318h18v1h-18zM1122 318h18v1h-18zM1180 318h18v1h-18zM1007 322h13v1h-13zM1065 322h13v1h-13zM1122 322h13v1h-13zM1180 322h13v1h-13zM1012 326h8v1h-8zM1070 326h8v1h-8zM1127 326h8v1h-8zM1185 326h8v1h-8zM1012 330h3v1h-3zM1070 330h3v1h-3zM1127 330h4v1h-4zM1185 330h3v1h-3zM998 353h8v1h-8zM1022 353h8v1h-8zM1055 353h8v1h-8zM1079 353h8v1h-8zM1113 353h8v1h-8zM1137 353h8v1h-8zM1170 353h9v1h-9zM1194 353h9v1h-9zM998 357h13v1h-13zM1022 357h13v1h-13zM1055 357h13v1h-13zM1079 357h13v1h-13zM1113 357h13v1h-13zM1137 357h13v1h-13zM1170 357h13v1h-13zM1194 357h13v1h-13zM998 361h32v1h-32zM1055 361h32v1h-32zM1113 361h32v1h-32zM1170 361h33v1h-33zM1002 365h28v1h-28zM1060 365h27v1h-27zM1118 365h27v1h-27zM1175 365h28v1h-28zM1002 368h23v1h-23zM1060 368h23v1h-23zM1118 368h22v1h-22zM1175 368h23v1h-23zM1007 372h18v1h-18zM1065 372h18v1h-18zM1122 372h18v1h-18zM1180 372h18v1h-18zM1007 376h13v1h-13zM1065 376h13v1h-13zM1122 376h13v1h-13zM1180 376h13v1h-13zM1012 380h8v1h-8zM1070 380h8v1h-8zM1127 380h8v1h-8zM1185 380h8v1h-8zM1012 384h3v1h-3zM1070 384h3v1h-3zM1127 384h4v1h-4zM1185 384h3v1h-3zM998 407h8v1h-8zM1022 407h8v1h-8zM1055 407h8v1h-8zM1079 407h8v1h-8zM1113 407h8v1h-8zM1137 407h8v1h-8zM1170 407h9v1h-9zM1194 407h9v1h-9zM998 411h13v1h-13zM1022 411h13v1h-13zM1055 411h13v1h-13zM1079 411h13v1h-13zM1113 411h13v1h-13zM1137 411h13v1h-13zM1170 411h13v1h-13zM1194 411h13v1h-13zM998 414h32v1h-32zM1055 414h32v1h-32zM1113 414h32v1h-32zM1170 414h33v1h-33zM1002 418h28v1h-28zM1060 418h27v1h-27zM1118 418h27v1h-27zM1175 418h28v1h-28zM1002 422h23v1h-23zM1060 422h23v1h-23zM1118 422h22v1h-22zM1175 422h23v1h-23zM1007 426h18v1h-18zM1065 426h18v1h-18zM1122 426h18v1h-18zM1180 426h18v1h-18zM1007 430h13v1h-13zM1065 430h13v1h-13zM1122 430h13v1h-13zM1180 430h13v1h-13zM1012 434h8v1h-8zM1070 434h8v1h-8zM1127 434h8v1h-8zM1185 434h8v1h-8zM1012 437h3v1h-3zM1070 437h3v1h-3zM1127 437h4v1h-4zM1185 437h3v1h-3zM998 460h8v1h-8zM1022 460h8v1h-8zM1055 460h8v1h-8zM1079 460h8v1h-8zM1113 460h8v1h-8zM1137 460h8v1h-8zM1170 460h9v1h-9zM1194 460h9v1h-9zM998 464h13v1h-13zM1022 464h13v1h-13zM1055 464h13v1h-13zM1079 464h13v1h-13zM1113 464h13v1h-13zM1137 464h13v1h-13zM1170 464h13v1h-13zM1194 464h13v1h-13zM998 468h32v1h-32zM1055 468h32v1h-32zM1113 468h32v1h-32zM1170 468h33v1h-33zM1002 472h28v1h-28zM1060 472h27v1h-27zM1118 472h27v1h-27zM1175 472h28v1h-28zM1002 476h23v1h-23zM1060 476h23v1h-23zM1118 476h22v1h-22zM1175 476h23v1h-23zM1007 480h18v1h-18zM1065 480h18v1h-18zM1122 480h18v1h-18zM1180 480h18v1h-18zM1007 483h13v1h-13zM1065 483h13v1h-13zM1122 483h13v1h-13zM1180 483h13v1h-13zM1012 487h8v1h-8zM1070 487h8v1h-8zM1127 487h8v1h-8zM1185 487h8v1h-8zM1012 491h3v1h-3zM1070 491h3v1h-3zM1127 491h4v1h-4zM1185 491h3v1h-3zM998 514h8v1h-8zM1022 514h8v1h-8zM1055 514h8v1h-8zM1079 514h8v1h-8zM1113 514h8v1h-8zM1137 514h8v1h-8zM1170 514h9v1h-9zM1194 514h9v1h-9zM998 518h13v1h-13zM1022 518h13v1h-13zM1055 518h13v1h-13zM1079 518h13v1h-13zM1113 518h13v1h-13zM1137 518h13v1h-13zM1170 518h13v1h-13zM1194 518h13v1h-13zM998 522h32v1h-32zM1055 522h32v1h-32zM1113 522h32v1h-32zM1170 522h33v1h-33zM1002 526h28v1h-28zM1060 526h27v1h-27zM1118 526h27v1h-27zM1175 526h28v1h-28zM1002 530h23v1h-23zM1060 530h23v1h-23zM1118 530h22v1h-22zM1175 530h23v1h-23zM1007 533h18v1h-18zM1065 533h18v1h-18zM1122 533h18v1h-18zM1180 533h18v1h-18zM1007 537h13v1h-13zM1065 537h13v1h-13zM1122 537h13v1h-13zM1180 537h13v1h-13zM1012 541h8v1h-8zM1070 541h8v1h-8zM1127 541h8v1h-8zM1185 541h8v1h-8zM1012 545h3v1h-3zM1070 545h3v1h-3zM1127 545h4v1h-4zM1185 545h3v1h-3zM998 568h8v1h-8zM1022 568h8v1h-8zM1055 568h8v1h-8zM1079 568h8v1h-8zM1113 568h8v1h-8zM1137 568h8v1h-8zM1170 568h9v1h-9zM1194 568h9v1h-9zM998 572h13v1h-13zM1022 572h13v1h-13zM1055 572h13v1h-13zM1079 572h13v1h-13zM1113 572h13v1h-13zM1137 572h13v1h-13zM1170 572h13v1h-13zM1194 572h13v1h-13zM998 576h32v1h-32zM1055 576h32v1h-32zM1113 576h32v1h-32zM1170 576h33v1h-33zM1002 579h28v1h-28zM1060 579h27v1h-27zM1118 579h27v1h-27zM1175 579h28v1h-28zM1002 583h23v1h-23zM1060 583h23v1h-23zM1118 583h22v1h-22zM1175 583h23v1h-23zM1007 587h18v1h-18zM1065 587h18v1h-18zM1122 587h18v1h-18zM1180 587h18v1h-18zM1007 591h13v1h-13zM1065 591h13v1h-13zM1122 591h13v1h-13zM1180 591h13v1h-13zM1012 595h8v1h-8zM1070 595h8v1h-8zM1127 595h8v1h-8zM1185 595h8v1h-8zM1012 599h3v1h-3zM1070 599h3v1h-3zM1127 599h4v1h-4zM1185 599h3v1h-3z" fill="#ff8080"/></g><path d="M986 613 986 176 989 176 989 172 991 172 991 168 994 168 994 164 996 164 996 160 999 160 999 157 1002 157 1002 153 1004 153 1004 149 1007 149 1007 145 1010 145 1010 141 1012 141 1012 137 1015 137 1015 133 1018 133 1018 130 1020 130 1020 126 1023 126 1023 122 1025 122 1025 118 1028 118 1028 114 1042 114 1042 116 1054 116 1054 120 1068 120 1068 124 1083 124 1083 127 1095 127 1095 131 1108 131 1108 135 1123 135 1123 139 1135 139 1135 143 1149 143 1149 147 1161 147 1161 150 1177 150 1177 154 1191 154 1191 158 1203 158 1203 162 1216 162 1216 496 1161 496 1161 557 1108 557 1108 613Z" fill="none" stroke="#000" stroke-width="1" transform="translate(0.5 0.5)"/><rect x="985" y="175" width="3" height="3" fill="#1a4a52"/><rect x="986" y="176" width="1" height="1" fill="#b8eef4"/><rect x="1027" y="113" width="3" height="3" fill="#1a4a52"/><rect x="1028" y="114" width="1" height="1" fill="#b8eef4"/><rect x="1215" y="161" width="3" height="3" fill="#1a4a52"/><rect x="1216" y="162" width="1" height="1" fill="#b8eef4"/><rect x="1215" y="496" width="3" height="3" fill="#1a4a52"/><rect x="1216" y="497" width="1" height="1" fill="#b8eef4"/><rect x="1161" y="496" width="3" height="3" fill="#1a4a52"/><rect x="1162" y="497" width="1" height="1" fill="#b8eef4"/><rect x="1161" y="554" width="3" height="3" fill="#1a4a52"/><rect x="1162" y="555" width="1" height="1" fill="#b8eef4"/><rect x="1107" y="554" width="3" height="3" fill="#1a4a52"/><rect x="1108" y="555" width="1" height="1" fill="#b8eef4"/><rect x="1107" y="612" width="3" height="3" fill="#1a4a52"/><rect x="1108" y="613" width="1" height="1" fill="#b8eef4"/><rect x="985" y="612" width="3" height="3" fill="#1a4a52"/><rect x="986" y="613" width="1" height="1" fill="#b8eef4"/></svg>
<svg class="a" style="left:1090px;top:352px" width="24" height="24">
<rect x="2.5" y="2.5" width="18" height="18" fill="#fff" stroke="#000" stroke-width="1.2"/>
<path d="M11.5 4l2.5 2.5h-1.3v3.8h3.8V9l2.5 2.5-2.5 2.5v-1.3h-3.8v3.8H14l-2.5 2.5L9 16.5h1.3v-3.8H6.5V14L4 11.5 6.5 9v1.3h3.8V6.5H9z" fill="#c8c8c8" stroke="#000" stroke-width="1.1" stroke-linejoin="round"/>
</svg>

<div id="vrul" class="a"></div>
<svg class="a" style="left:0;top:0" width="1366" height="768"><rect x="1323" y="71" width="2" height="586" fill="#f0f0f0"/><rect x="1325" y="71" width="1" height="586" fill="#fbfbfb"/><rect x="1326" y="601" width="23" height="25" fill="#dcdcf8"/><path d="M1326 651.5h7M1342 651.5h7" stroke="#7e8e98" stroke-width="1.5"/><path d="M1326 632.5h7M1342 632.5h7" stroke="#7e8e98" stroke-width="1.5"/><path d="M1326 613.5h23" stroke="#7e8e98" stroke-width="1"/><path d="M1326 594.5h7M1342 594.5h7" stroke="#7e8e98" stroke-width="1.5"/><path d="M1326 575.5h7M1342 575.5h7" stroke="#7e8e98" stroke-width="1.5"/><path d="M1326 555.5h7M1342 555.5h7" stroke="#7e8e98" stroke-width="1.5"/><path d="M1326 536.5h7M1342 536.5h7" stroke="#7e8e98" stroke-width="1.5"/><path d="M1326 517.5h23" stroke="#7e8e98" stroke-width="1"/><path d="M1326 498.5h7M1342 498.5h7" stroke="#7e8e98" stroke-width="1.5"/><path d="M1326 479.5h7M1342 479.5h7" stroke="#7e8e98" stroke-width="1.5"/><path d="M1326 459.5h7M1342 459.5h7" stroke="#7e8e98" stroke-width="1.5"/><path d="M1326 440.5h7M1342 440.5h7" stroke="#7e8e98" stroke-width="1.5"/><path d="M1326 421.5h23" stroke="#7e8e98" stroke-width="1"/><path d="M1326 402.5h7M1342 402.5h7" stroke="#7e8e98" stroke-width="1.5"/><path d="M1326 383.5h7M1342 383.5h7" stroke="#7e8e98" stroke-width="1.5"/><path d="M1326 363.5h7M1342 363.5h7" stroke="#7e8e98" stroke-width="1.5"/><path d="M1326 344.5h7M1342 344.5h7" stroke="#7e8e98" stroke-width="1.5"/><path d="M1326 325.5h23" stroke="#7e8e98" stroke-width="1"/><path d="M1326 306.5h7M1342 306.5h7" stroke="#7e8e98" stroke-width="1.5"/><path d="M1326 287.5h7M1342 287.5h7" stroke="#7e8e98" stroke-width="1.5"/><path d="M1326 267.5h7M1342 267.5h7" stroke="#7e8e98" stroke-width="1.5"/><path d="M1326 248.5h7M1342 248.5h7" stroke="#7e8e98" stroke-width="1.5"/><path d="M1326 229.5h23" stroke="#7e8e98" stroke-width="1"/><path d="M1326 210.5h7M1342 210.5h7" stroke="#7e8e98" stroke-width="1.5"/><path d="M1326 191.5h7M1342 191.5h7" stroke="#7e8e98" stroke-width="1.5"/><path d="M1326 171.5h7M1342 171.5h7" stroke="#7e8e98" stroke-width="1.5"/><path d="M1326 152.5h7M1342 152.5h7" stroke="#7e8e98" stroke-width="1.5"/><path d="M1326 133.5h23" stroke="#7e8e98" stroke-width="1"/><path d="M1326 114.5h7M1342 114.5h7" stroke="#7e8e98" stroke-width="1.5"/><path d="M1326 95.5h7M1342 95.5h7" stroke="#7e8e98" stroke-width="1.5"/><path d="M1326 75.5h7M1342 75.5h7" stroke="#7e8e98" stroke-width="1.5"/><text x="1337.5" y="617.6" font-family="Liberation Sans" font-weight="bold" font-size="12" fill="#566068" text-anchor="middle">0</text><text x="1337.5" y="521.6" font-family="Liberation Sans" font-weight="bold" font-size="12" fill="#566068" text-anchor="middle">50</text><text x="1337.5" y="425.6" font-family="Liberation Sans" font-weight="bold" font-size="12" fill="#566068" text-anchor="middle">100</text><text x="1337.5" y="329.6" font-family="Liberation Sans" font-weight="bold" font-size="12" fill="#566068" text-anchor="middle">150</text><text x="1337.5" y="233.6" font-family="Liberation Sans" font-weight="bold" font-size="12" fill="#566068" text-anchor="middle">200</text><text x="1337.5" y="137.6" font-family="Liberation Sans" font-weight="bold" font-size="12" fill="#566068" text-anchor="middle">250</text><path d="M1325 223.5h24" stroke="#a02a2a" stroke-width="1.2"/><path d="M1325 222.3h24" stroke="#f0b0b0" stroke-width=".8"/><rect x="1328.5" y="77.5" width="18" height="21" rx="4" fill="#e2e2fc" stroke="#8e96a6" stroke-width="1"/><text x="1337.8" y="92.3" font-family="Liberation Sans" font-weight="bold" font-size="13" fill="#5a606e" text-anchor="middle">R</text><rect x="1328.5" y="629.5" width="18" height="21" rx="4" fill="#e2e2fc" stroke="#8e96a6" stroke-width="1"/><text x="1337.8" y="644.3" font-family="Liberation Sans" font-weight="bold" font-size="13" fill="#5a606e" text-anchor="middle">R</text><path d="M1349.5 71v586" stroke="#7896a0" stroke-width="1"/></svg>
<div id="vsb" class="a chk"></div>
<svg class="a" style="left:1350px;top:71px" width="16" height="586">
<g><rect x="0" y="0" width="16" height="17" fill="#696969"/><rect x="0" y="0" width="15" height="16" fill="#fff"/><rect x="1" y="1" width="14" height="15" fill="#a0a0a0"/><rect x="1" y="1" width="13" height="14" fill="#f0f0f0"/><path d="M4 11h8l-4-4z" fill="#000"/></g>
<g transform="translate(0 569)"><rect x="0" y="0" width="16" height="17" fill="#696969"/><rect x="0" y="0" width="15" height="16" fill="#fff"/><rect x="1" y="1" width="14" height="15" fill="#a0a0a0"/><rect x="1" y="1" width="13" height="14" fill="#f0f0f0"/><path d="M4 6h8l-4 4z" fill="#000"/></g>
<g transform="translate(0 285)"><rect x="0" y="0" width="16" height="17" fill="#696969"/><rect x="0" y="0" width="15" height="16" fill="#fff"/><rect x="1" y="1" width="14" height="15" fill="#a0a0a0"/><rect x="1" y="1" width="13" height="14" fill="#f0f0f0"/></g>
</svg>

<div id="hrul" class="a"></div>
<svg class="a" style="left:0;top:0" width="1366" height="768"><rect x="79" y="657" width="1247" height="4" fill="#f0f0f0"/><rect x="79" y="661" width="1247" height="1" fill="#fbfbfb"/><rect x="974" y="662" width="25" height="22" fill="#dcdcf8"/><path d="M86.5 662v3M86.5 681v3" stroke="#7e8e98" stroke-width="1"/><path d="M98.5 662v7M98.5 678v6" stroke="#7e8e98" stroke-width="1"/><path d="M110.5 662v3M110.5 681v3" stroke="#7e8e98" stroke-width="1"/><path d="M122.5 662v22" stroke="#7e8e98" stroke-width="1"/><path d="M134.5 662v3M134.5 681v3" stroke="#7e8e98" stroke-width="1"/><path d="M146.5 662v7M146.5 678v6" stroke="#7e8e98" stroke-width="1"/><path d="M158.5 662v3M158.5 681v3" stroke="#7e8e98" stroke-width="1"/><path d="M170.5 662v22" stroke="#7e8e98" stroke-width="1"/><path d="M182.5 662v3M182.5 681v3" stroke="#7e8e98" stroke-width="1"/><path d="M194.5 662v7M194.5 678v6" stroke="#7e8e98" stroke-width="1"/><path d="M206.5 662v3M206.5 681v3" stroke="#7e8e98" stroke-width="1"/><path d="M218.5 662v22" stroke="#7e8e98" stroke-width="1"/><path d="M230.5 662v3M230.5 681v3" stroke="#7e8e98" stroke-width="1"/><path d="M242.5 662v7M242.5 678v6" stroke="#7e8e98" stroke-width="1"/><path d="M254.5 662v3M254.5 681v3" stroke="#7e8e98" stroke-width="1"/><path d="M266.5 662v22" stroke="#7e8e98" stroke-width="1"/><path d="M278.5 662v3M278.5 681v3" stroke="#7e8e98" stroke-width="1"/><path d="M290.5 662v7M290.5 678v6" stroke="#7e8e98" stroke-width="1"/><path d="M302.5 662v3M302.5 681v3" stroke="#7e8e98" stroke-width="1"/><path d="M314.5 662v22" stroke="#7e8e98" stroke-width="1"/><path d="M326.5 662v3M326.5 681v3" stroke="#7e8e98" stroke-width="1"/><path d="M338.5 662v7M338.5 678v6" stroke="#7e8e98" stroke-width="1"/><path d="M350.5 662v3M350.5 681v3" stroke="#7e8e98" stroke-width="1"/><path d="M362.5 662v22" stroke="#7e8e98" stroke-width="1"/><path d="M374.5 662v3M374.5 681v3" stroke="#7e8e98" stroke-width="1"/><path d="M386.5 662v7M386.5 678v6" stroke="#7e8e98" stroke-width="1"/><path d="M398.5 662v3M398.5 681v3" stroke="#7e8e98" stroke-width="1"/><path d="M410.5 662v22" stroke="#7e8e98" stroke-width="1"/><path d="M422.5 662v3M422.5 681v3" stroke="#7e8e98" stroke-width="1"/><path d="M434.5 662v7M434.5 678v6" stroke="#7e8e98" stroke-width="1"/><path d="M446.5 662v3M446.5 681v3" stroke="#7e8e98" stroke-width="1"/><path d="M458.5 662v22" stroke="#7e8e98" stroke-width="1"/><path d="M470.5 662v3M470.5 681v3" stroke="#7e8e98" stroke-width="1"/><path d="M482.5 662v7M482.5 678v6" stroke="#7e8e98" stroke-width="1"/><path d="M494.5 662v3M494.5 681v3" stroke="#7e8e98" stroke-width="1"/><path d="M506.5 662v22" stroke="#7e8e98" stroke-width="1"/><path d="M518.5 662v3M518.5 681v3" stroke="#7e8e98" stroke-width="1"/><path d="M530.5 662v7M530.5 678v6" stroke="#7e8e98" stroke-width="1"/><path d="M542.5 662v3M542.5 681v3" stroke="#7e8e98" stroke-width="1"/><path d="M554.5 662v22" stroke="#7e8e98" stroke-width="1"/><path d="M566.5 662v3M566.5 681v3" stroke="#7e8e98" stroke-width="1"/><path d="M578.5 662v7M578.5 678v6" stroke="#7e8e98" stroke-width="1"/><path d="M590.5 662v3M590.5 681v3" stroke="#7e8e98" stroke-width="1"/><path d="M602.5 662v22" stroke="#7e8e98" stroke-width="1"/><path d="M614.5 662v3M614.5 681v3" stroke="#7e8e98" stroke-width="1"/><path d="M626.5 662v7M626.5 678v6" stroke="#7e8e98" stroke-width="1"/><path d="M638.5 662v3M638.5 681v3" stroke="#7e8e98" stroke-width="1"/><path d="M650.5 662v22" stroke="#7e8e98" stroke-width="1"/><path d="M662.5 662v3M662.5 681v3" stroke="#7e8e98" stroke-width="1"/><path d="M674.5 662v7M674.5 678v6" stroke="#7e8e98" stroke-width="1"/><path d="M686.5 662v3M686.5 681v3" stroke="#7e8e98" stroke-width="1"/><path d="M698.5 662v22" stroke="#7e8e98" stroke-width="1"/><path d="M710.5 662v3M710.5 681v3" stroke="#7e8e98" stroke-width="1"/><path d="M722.5 662v7M722.5 678v6" stroke="#7e8e98" stroke-width="1"/><path d="M734.5 662v3M734.5 681v3" stroke="#7e8e98" stroke-width="1"/><path d="M746.5 662v22" stroke="#7e8e98" stroke-width="1"/><path d="M758.5 662v3M758.5 681v3" stroke="#7e8e98" stroke-width="1"/><path d="M770.5 662v7M770.5 678v6" stroke="#7e8e98" stroke-width="1"/><path d="M782.5 662v3M782.5 681v3" stroke="#7e8e98" stroke-width="1"/><path d="M794.5 662v22" stroke="#7e8e98" stroke-width="1"/><path d="M806.5 662v3M806.5 681v3" stroke="#7e8e98" stroke-width="1"/><path d="M818.5 662v7M818.5 678v6" stroke="#7e8e98" stroke-width="1"/><path d="M830.5 662v3M830.5 681v3" stroke="#7e8e98" stroke-width="1"/><path d="M842.5 662v22" stroke="#7e8e98" stroke-width="1"/><path d="M854.5 662v3M854.5 681v3" stroke="#7e8e98" stroke-width="1"/><path d="M866.5 662v7M866.5 678v6" stroke="#7e8e98" stroke-width="1"/><path d="M878.5 662v3M878.5 681v3" stroke="#7e8e98" stroke-width="1"/><path d="M890.5 662v22" stroke="#7e8e98" stroke-width="1"/><path d="M902.5 662v3M902.5 681v3" stroke="#7e8e98" stroke-width="1"/><path d="M914.5 662v7M914.5 678v6" stroke="#7e8e98" stroke-width="1"/><path d="M926.5 662v3M926.5 681v3" stroke="#7e8e98" stroke-width="1"/><path d="M938.5 662v22" stroke="#7e8e98" stroke-width="1"/><path d="M950.5 662v3M950.5 681v3" stroke="#7e8e98" stroke-width="1"/><path d="M962.5 662v7M962.5 678v6" stroke="#7e8e98" stroke-width="1"/><path d="M974.5 662v3M974.5 681v3" stroke="#7e8e98" stroke-width="1"/><path d="M986.5 662v22" stroke="#7e8e98" stroke-width="1"/><path d="M998.5 662v3M998.5 681v3" stroke="#7e8e98" stroke-width="1"/><path d="M1010.5 662v7M1010.5 678v6" stroke="#7e8e98" stroke-width="1"/><path d="M1022.5 662v3M1022.5 681v3" stroke="#7e8e98" stroke-width="1"/><path d="M1034.5 662v22" stroke="#7e8e98" stroke-width="1"/><path d="M1046.5 662v3M1046.5 681v3" stroke="#7e8e98" stroke-width="1"/><path d="M1058.5 662v7M1058.5 678v6" stroke="#7e8e98" stroke-width="1"/><path d="M1070.5 662v3M1070.5 681v3" stroke="#7e8e98" stroke-width="1"/><path d="M1082.5 662v22" stroke="#7e8e98" stroke-width="1"/><path d="M1094.5 662v3M1094.5 681v3" stroke="#7e8e98" stroke-width="1"/><path d="M1106.5 662v7M1106.5 678v6" stroke="#7e8e98" stroke-width="1"/><path d="M1118.5 662v3M1118.5 681v3" stroke="#7e8e98" stroke-width="1"/><path d="M1130.5 662v22" stroke="#7e8e98" stroke-width="1"/><path d="M1142.5 662v3M1142.5 681v3" stroke="#7e8e98" stroke-width="1"/><path d="M1154.5 662v7M1154.5 678v6" stroke="#7e8e98" stroke-width="1"/><path d="M1166.5 662v3M1166.5 681v3" stroke="#7e8e98" stroke-width="1"/><path d="M1178.5 662v22" stroke="#7e8e98" stroke-width="1"/><path d="M1190.5 662v3M1190.5 681v3" stroke="#7e8e98" stroke-width="1"/><path d="M1202.5 662v7M1202.5 678v6" stroke="#7e8e98" stroke-width="1"/><path d="M1214.5 662v3M1214.5 681v3" stroke="#7e8e98" stroke-width="1"/><path d="M1226.5 662v22" stroke="#7e8e98" stroke-width="1"/><path d="M1238.5 662v3M1238.5 681v3" stroke="#7e8e98" stroke-width="1"/><path d="M1250.5 662v7M1250.5 678v6" stroke="#7e8e98" stroke-width="1"/><path d="M1262.5 662v3M1262.5 681v3" stroke="#7e8e98" stroke-width="1"/><path d="M1274.5 662v22" stroke="#7e8e98" stroke-width="1"/><path d="M1286.5 662v3M1286.5 681v3" stroke="#7e8e98" stroke-width="1"/><path d="M1298.5 662v7M1298.5 678v6" stroke="#7e8e98" stroke-width="1"/><path d="M1310.5 662v3M1310.5 681v3" stroke="#7e8e98" stroke-width="1"/><path d="M1322.5 662v22" stroke="#7e8e98" stroke-width="1"/><text x="122.5" y="678" font-family="Liberation Sans" font-weight="bold" font-size="12" fill="#566068" text-anchor="middle">360</text><text x="170.5" y="678" font-family="Liberation Sans" font-weight="bold" font-size="12" fill="#566068" text-anchor="middle">340</text><text x="218.5" y="678" font-family="Liberation Sans" font-weight="bold" font-size="12" fill="#566068" text-anchor="middle">320</text><text x="266.5" y="678" font-family="Liberation Sans" font-weight="bold" font-size="12" fill="#566068" text-anchor="middle">300</text><text x="314.5" y="678" font-family="Liberation Sans" font-weight="bold" font-size="12" fill="#566068" text-anchor="middle">280</text><text x="362.5" y="678" font-family="Liberation Sans" font-weight="bold" font-size="12" fill="#566068" text-anchor="middle">260</text><text x="410.5" y="678" font-family="Liberation Sans" font-weight="bold" font-size="12" fill="#566068" text-anchor="middle">240</text><text x="458.5" y="678" font-family="Liberation Sans" font-weight="bold" font-size="12" fill="#566068" text-anchor="middle">220</text><text x="506.5" y="678" font-family="Liberation Sans" font-weight="bold" font-size="12" fill="#566068" text-anchor="middle">200</text><text x="554.5" y="678" font-family="Liberation Sans" font-weight="bold" font-size="12" fill="#566068" text-anchor="middle">180</text><text x="602.5" y="678" font-family="Liberation Sans" font-weight="bold" font-size="12" fill="#566068" text-anchor="middle">160</text><text x="650.5" y="678" font-family="Liberation Sans" font-weight="bold" font-size="12" fill="#566068" text-anchor="middle">140</text><text x="698.5" y="678" font-family="Liberation Sans" font-weight="bold" font-size="12" fill="#566068" text-anchor="middle">120</text><text x="746.5" y="678" font-family="Liberation Sans" font-weight="bold" font-size="12" fill="#566068" text-anchor="middle">100</text><text x="794.5" y="678" font-family="Liberation Sans" font-weight="bold" font-size="12" fill="#566068" text-anchor="middle">80</text><text x="842.5" y="678" font-family="Liberation Sans" font-weight="bold" font-size="12" fill="#566068" text-anchor="middle">60</text><text x="890.5" y="678" font-family="Liberation Sans" font-weight="bold" font-size="12" fill="#566068" text-anchor="middle">40</text><text x="938.5" y="678" font-family="Liberation Sans" font-weight="bold" font-size="12" fill="#566068" text-anchor="middle">20</text><text x="986.5" y="678" font-family="Liberation Sans" font-weight="bold" font-size="12" fill="#566068" text-anchor="middle">0</text><text x="1034.5" y="678" font-family="Liberation Sans" font-weight="bold" font-size="12" fill="#566068" text-anchor="middle">20</text><text x="1082.5" y="678" font-family="Liberation Sans" font-weight="bold" font-size="12" fill="#566068" text-anchor="middle">40</text><text x="1130.5" y="678" font-family="Liberation Sans" font-weight="bold" font-size="12" fill="#566068" text-anchor="middle">60</text><text x="1178.5" y="678" font-family="Liberation Sans" font-weight="bold" font-size="12" fill="#566068" text-anchor="middle">80</text><text x="1226.5" y="678" font-family="Liberation Sans" font-weight="bold" font-size="12" fill="#566068" text-anchor="middle">100</text><text x="1274.5" y="678" font-family="Liberation Sans" font-weight="bold" font-size="12" fill="#566068" text-anchor="middle">120</text><text x="1322.5" y="678" font-family="Liberation Sans" font-weight="bold" font-size="12" fill="#566068" text-anchor="middle">140</text><rect x="1323" y="662" width="3" height="22" fill="#f0f0f0"/><path d="M130.5 662v22" stroke="#b02a2a" stroke-width="1.2"/><rect x="85.5" y="664.5" width="21" height="18" rx="4" fill="#e2e2fc" stroke="#8e96a6" stroke-width="1"/><text x="96" y="677.5" font-family="Liberation Sans" font-weight="bold" font-size="13" fill="#5a606e" text-anchor="middle">S</text><rect x="1295.5" y="664.5" width="21" height="18" rx="4" fill="#e2e2fc" stroke="#8e96a6" stroke-width="1"/><text x="1306" y="677.5" font-family="Liberation Sans" font-weight="bold" font-size="13" fill="#5a606e" text-anchor="middle">S</text></svg>

<div id="hsb" class="a chk"></div>
<svg class="a" style="left:79px;top:684px" width="1244" height="17">
<g transform="translate(1 0)"><rect x="0" y="0" width="16" height="16" fill="#696969"/><rect x="0" y="0" width="15" height="15" fill="#fff"/><rect x="1" y="1" width="14" height="14" fill="#a0a0a0"/><rect x="1" y="1" width="13" height="13" fill="#f0f0f0"/><path d="M10 3.5v8l-4-4z" fill="#000"/></g>
<g transform="translate(1227 0)"><rect x="0" y="0" width="16" height="16" fill="#696969"/><rect x="0" y="0" width="15" height="15" fill="#fff"/><rect x="1" y="1" width="14" height="14" fill="#a0a0a0"/><rect x="1" y="1" width="13" height="13" fill="#f0f0f0"/><path d="M6 3.5v8l4-4z" fill="#000"/></g>
<g transform="translate(615 0)"><rect x="0" y="0" width="17" height="16" fill="#696969"/><rect x="0" y="0" width="16" height="15" fill="#fff"/><rect x="1" y="1" width="15" height="14" fill="#a0a0a0"/><rect x="1" y="1" width="14" height="13" fill="#f0f0f0"/></g>
</svg>

<div class="a" style="left:1323px;top:657px;width:43px;height:44px;background:#f0f0f0"></div>
<div class="a" style="left:1326px;top:660px;width:40px;height:19px;background:#c8d8e0;border-bottom:1px solid #72808a"></div>
<div class="a" style="left:1326px;top:681px;width:40px;height:20px;background:#a8bfcb;border-bottom:1px solid #72808a"></div>
<span class="t" style="left:1332px;top:664px;font-weight:bold;font-size:11px;color:#101820">203.7</span>
<span class="t" style="left:1331px;top:685px;font-weight:bold;font-size:11px;color:#101820">-356.8</span>

<div id="status" class="a"></div>
<div id="taskbar" class="a"></div>
<div class="a" style="left:48px;top:728px;width:288px;height:40px;background:#fff;border-left:1px solid #c4ccd0;border-top:1px solid #c4ccd0"></div>
<div class="a" style="left:436px;top:728px;width:48px;height:40px;background:#f5bb8e"></div>
<div class="a" style="left:583px;top:728px;width:48px;height:40px;background:#e4eff2"></div>
<span class="t" style="left:88px;top:741px;font-size:14.3px;color:#1a1a1a">Type here to search</span>
<span class="t" style="left:962px;top:741px;font-size:14px;color:#111;transform-origin:0 0;transform:scaleX(0.89)">16°C</span>
<span class="t" style="left:1000px;top:741px;font-size:14px;color:#111">Mostly sunny</span>
<span class="t" style="left:1264px;top:733px;font-size:12px;color:#111">17:40</span>
<span class="t" style="left:1249px;top:750px;font-size:12px;color:#111;letter-spacing:-0.2px">23/05/2023</span>
<svg class="a" style="left:0;top:728px" width="1366" height="40">
<defs>
<linearGradient id="edg" x1="0" y1="0" x2="1" y2="1"><stop offset="0" stop-color="#38c8e8"/><stop offset=".5" stop-color="#1a7ad0"/><stop offset="1" stop-color="#0a4a9a"/></linearGradient>
<radialGradient id="sun" cx=".4" cy=".4" r=".7"><stop offset="0" stop-color="#f8c030"/><stop offset="1" stop-color="#e86a10"/></radialGradient>
</defs>
<!-- windows logo -->
<path d="M16 14.2l6.6-.9v6.5H16zM23.6 13.2l8.5-1.2v7.8h-8.5zM16 20.8h6.6v6.4L16 26.3zM23.6 20.8h8.5v7.6l-8.5-1.1z" fill="#000"/>
<!-- search icon -->
<circle cx="70.5" cy="17.4" r="5" fill="none" stroke="#111" stroke-width="1.3"/>
<path d="M66.8 21.2l-6.5 6.5" stroke="#111" stroke-width="1.4"/>
<!-- flowers -->
<g>
<ellipse cx="263" cy="30" rx="3.5" ry="7" fill="#7aa462" transform="rotate(-30 263 30)"/>
<ellipse cx="325.5" cy="30.5" rx="3.5" ry="7.5" fill="#74a05c" transform="rotate(40 325.5 30.5)"/>
<path d="M262 16l9 10M264 18.5l-2.5 1M266 20.5l3-2.5M267.5 23l-3 1.5M269 24l3-2" stroke="#80a868" stroke-width="1.8"/>
<path d="M327 7l-8 14M325 10l3-1M323 13l-3-2M322 15.5l4 0M320.5 18l-3-1" stroke="#7aa464" stroke-width="2"/>
<path d="M272 18l4 2-1-6 4 5 1-7 2.5 7 2.5-5-.5 6 3-2-3 6h-10z" fill="#b4b4c6"/>
<path d="M284 11l3.5 2.5-.5-7.5 4 6 2-7 2 7 3.5-5-1 6 3-2-3.5 6.5h-11z" fill="#a8a8be"/>
<path d="M288.5 16v10M290 16l1 10" stroke="#6a9c5a" stroke-width="1.5"/>
<ellipse cx="299" cy="27" rx="5.5" ry="11" fill="#9478d0"/>
<circle cx="308.5" cy="18.5" r="6" fill="#f2aa74"/>
<circle cx="274.5" cy="32" r="7.5" fill="#f2a47c"/>
<ellipse cx="320" cy="25" rx="7.5" ry="6" fill="#e87c92"/>
<path d="M275 40l4-8 2 5 3-10 2 9 3-8 2 8 3-6 2 6 3-3 2 7z" fill="#f4c83a"/>
<circle cx="288" cy="36" r="9" fill="#f2c642"/>
<circle cx="312" cy="30.5" r="8.5" fill="#f4a4cc"/>
<path d="M296 27l4 3-2 5 5 2-4 3z" fill="#8c70c8"/>
</g>
<!-- task view -->
<path d="M352.5 13.5v2M352.5 24.5v2M352.5 13.5h10M352.5 26.5h10M355 15.5h6.5v9H355z" fill="none" stroke="#000" stroke-width="1.2"/>
<path d="M366.5 16v10" stroke="#000" stroke-width="1.2"/><rect x="365.5" y="12" width="2.2" height="2.2" fill="#000"/>
<!-- edge -->
<linearGradient id="edg2" x1="0" y1="0" x2="1" y2=".8"><stop offset="0" stop-color="#18a4e4"/><stop offset=".55" stop-color="#30c8c0"/><stop offset="1" stop-color="#62e04e"/></linearGradient>
<circle cx="411" cy="19.8" r="12" fill="#1a7fd6"/>
<path d="M399.3 17.5Q401.5 7.8 411 7.8A12 12 0 0 1 423 19.8Q423 25.6 417.5 25.6Q413.2 25.6 412.6 22.6Q414 18.6 410.8 17Q406 15 399.3 17.5z" fill="url(#edg2)"/>
<path d="M404.5 21.5Q404 30.5 413 31Q418.5 31 421.8 26.8A12 12 0 0 1 405.5 30.5Q401.5 27 404.5 21.5z" fill="#0c4ea8"/>
<circle cx="410.6" cy="20.6" r="2.6" fill="#cadde3"/>
<path d="M411.5 22.8Q414.5 26.2 421.8 26.3L421 28Q414 29 410.8 23.5z" fill="#cadde3"/>
<rect x="391" y="38" width="40" height="2" fill="#0a64c8"/>
<!-- explorer -->
<rect x="436" y="38" width="48" height="2" fill="#f7800a"/>
<path d="M448.5 12.5h7l1.5 2h13v14h-21.5z" fill="#f8d060"/>
<path d="M448.5 12.5h7l1.5 2h-8.5z" fill="#e8a818"/>
<path d="M453 29v-7h12v7h-3.5v-3.5h-5V29z" fill="#3a88cc"/>
<!-- mail -->
<path d="M497 15.5l12-7 12 7v15.5H497z" fill="#2a9ae8"/>
<path d="M497 15.5l12-7 12 7z" fill="#0a5ab0"/>
<path d="M499 16h20l-10 6z" fill="#fff"/>
<path d="M497 31l12-10 12 10z" fill="#48b8f0"/>
<!-- chrome -->
<circle cx="558" cy="19.5" r="12" fill="#e03a2e"/>
<path d="M558 19.5L547.6 25.5A12 12 0 0 0 558 31.5z" fill="#2ea050"/>
<path d="M558 19.5l-10.4 6A12 12 0 0 1 548 13.5z" fill="#2ea050"/>
<path d="M558 19.5h12A12 12 0 0 1 558 31.5z" fill="#f8c818"/>
<path d="M558 19.5L568.4 13.5A12 12 0 0 1 570 19.5z" fill="#f8c818"/>
<circle cx="558" cy="19.5" r="5.2" fill="#fff"/><circle cx="558" cy="19.5" r="4" fill="#2a74e0"/>
<rect x="538" y="38" width="40" height="2" fill="#0a64c8"/>
<!-- 9 app -->
<g transform="translate(597.4 7.8)"><g fill="none" stroke-linecap="round"><path d="M15.2 7.2A6.2 5 0 1 1 15.2 7.1M15.3 8.5Q15 18.5 4 23" stroke="#1a8a1a" stroke-width="4.6"/><path d="M15.2 7.2A6.2 5 0 1 1 15.2 7.1M15.3 8.5Q15 18.5 4 23" stroke="#3cc23c" stroke-width="2.8"/><path d="M15.2 7.2A6.2 5 0 1 1 15.2 7.1M15.3 8.5Q15 18.5 4 23" stroke="#90f090" stroke-width="1" stroke-dasharray="1 2"/></g></g>
<rect x="583" y="38" width="48" height="2" fill="#0a64c8"/>
<!-- weather -->
<circle cx="941" cy="19.7" r="10.3" fill="url(#sun)"/>
<circle cx="950" cy="10.8" r="3.2" fill="#d02020"/>
<path d="M939 25.5a3 3 0 0 1 1-5.5a4 4 0 0 1 7.5-1a3 3 0 0 1 3 6.5z" fill="#e8eef8" stroke="#a8b8d0" stroke-width=".6"/>
<!-- tray -->
<path d="M1105 23l6-6 6 6" fill="none" stroke="#111" stroke-width="1.3"/>
<rect x="1131" y="17" width="6.5" height="8" rx="1" fill="none" stroke="#111" stroke-width="1.1"/><path d="M1137.5 19.5l3-1.5v6l-3-1.5M1130.5 14q3.5-2 7 0M1130.5 28q3.5 2 7 0" fill="none" stroke="#111" stroke-width="1"/>
<path d="M1152 25a4 4 0 0 1 1-7a5.5 5.5 0 0 1 10 1a3.5 3.5 0 0 1 1 6z" fill="#888" stroke="#333" stroke-width="1"/>
<path d="M1176 16v6M1179 16v4M1175 18h5v3l-2 2h-1l-2-2z M1177.5 23v3" fill="none" stroke="#111" stroke-width="1.1"/><rect x="1181.5" y="17.5" width="8.5" height="7" fill="none" stroke="#111" stroke-width="1.1"/><path d="M1190 19.5h1.5v3H1190" fill="none" stroke="#111" stroke-width="1"/><rect x="1182.5" y="20" width="3" height="3.5" fill="#111"/>
<path d="M1203 26q0-9 9-10M1206 26q0-6 6-7M1209 26q0-3 3-4" fill="none" stroke="#111" stroke-width="1.1"/><circle cx="1212.5" cy="25.5" r="1.4" fill="#111"/>
<path d="M1224 17.5h3l4.5-4v14l-4.5-4h-3z" fill="none" stroke="#111" stroke-width="1.1"/><path d="M1233.5 17.5q1.5 3 0 6M1236 15.5q2.5 5 0 10M1238.5 13.5q3.5 7 0 14" fill="none" stroke="#111" stroke-width="1.1"/>
<!-- notification -->
<path d="M1325.5 12h15.5v12h-9l-3.5 3.5V24h-3z" fill="#111"/>
<path d="M1328.5 15.5h9.5M1328.5 18h9.5M1328.5 20.5h6" stroke="#cadde3" stroke-width="1"/>
<circle cx="1340.5" cy="27.5" r="7.3" fill="#b8bcc0" stroke="#505860" stroke-width="1.2"/>
<text x="1340.5" y="32" font-family="Liberation Sans" font-size="12" font-weight="bold" fill="#202020" text-anchor="middle">1</text>
<path d="M1361.5 0v40" stroke="#9aaab0" stroke-width="1"/>
</svg>

</body></html>
